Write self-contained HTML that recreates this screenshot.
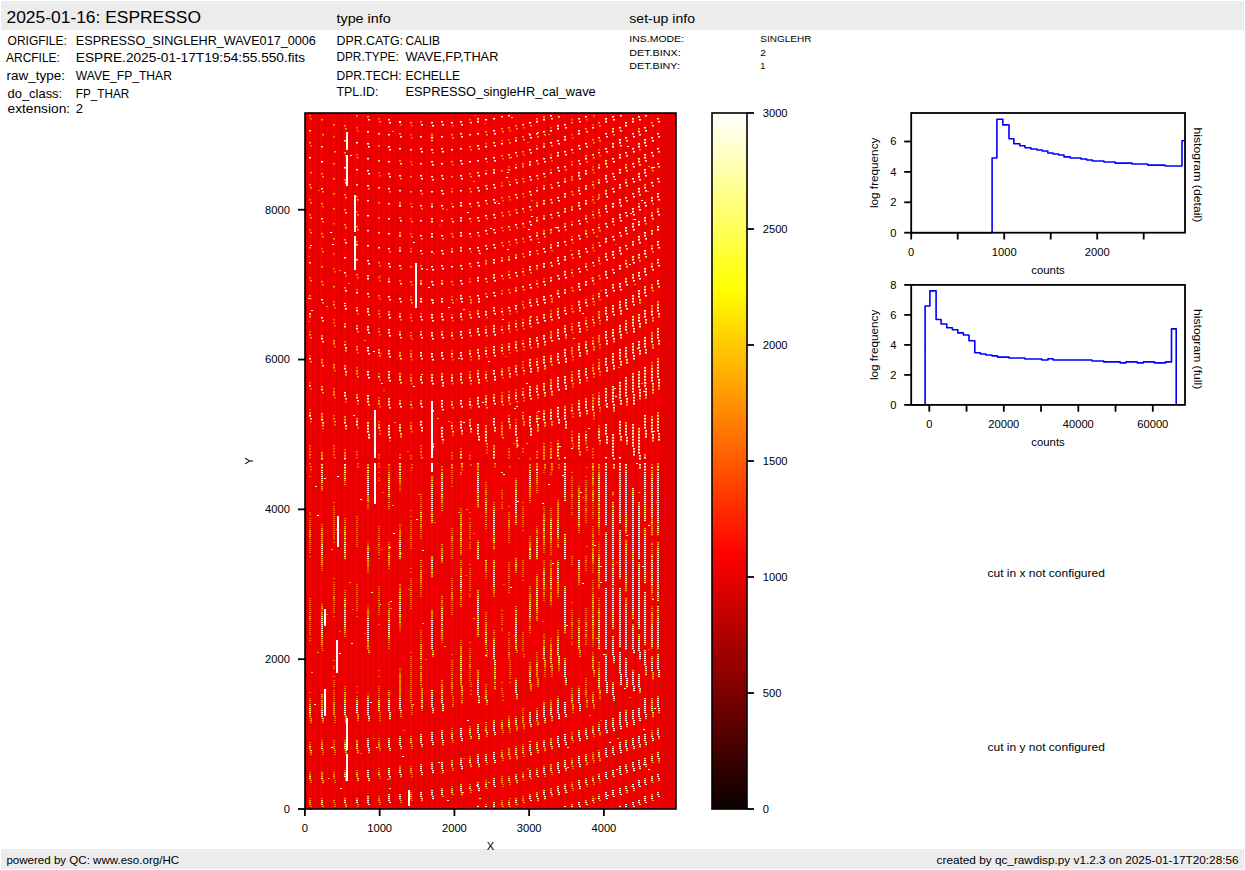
<!DOCTYPE html>
<html><head><meta charset="utf-8"><style>
html,body{margin:0;padding:0;background:#fff;width:1245px;height:870px;overflow:hidden}
svg{display:block}
text{font-family:"Liberation Sans", sans-serif;fill:#000}
</style></head><body>
<svg width="1245" height="870" viewBox="0 0 1245 870">
<rect x="1" y="1" width="1243" height="29" fill="#ececec"/>
<rect x="1" y="849" width="1243" height="20" fill="#ececec"/>
<text x="6.5" y="22.9" font-size="17.2" textLength="194.5" lengthAdjust="spacingAndGlyphs">2025-01-16: ESPRESSO</text>
<text x="336.5" y="22.6" font-size="12" textLength="54.2" lengthAdjust="spacingAndGlyphs">type info</text>
<text x="629.3" y="22.7" font-size="12" textLength="65.7" lengthAdjust="spacingAndGlyphs">set-up info</text>
<text x="7.6" y="44.9" font-size="12.6" textLength="59.2" lengthAdjust="spacingAndGlyphs">ORIGFILE:</text>
<text x="75.8" y="45.2" font-size="12.6" textLength="240" lengthAdjust="spacingAndGlyphs">ESPRESSO_SINGLEHR_WAVE017_0006</text>
<text x="6.1" y="61.8" font-size="12.6" textLength="53.7" lengthAdjust="spacingAndGlyphs">ARCFILE:</text>
<text x="75.8" y="61.5" font-size="12.6" textLength="229.4" lengthAdjust="spacingAndGlyphs">ESPRE.2025-01-17T19:54:55.550.fits</text>
<text x="6.5" y="80.2" font-size="12.6" textLength="58.5" lengthAdjust="spacingAndGlyphs">raw_type:</text>
<text x="75.8" y="80.4" font-size="12.6" textLength="96.1" lengthAdjust="spacingAndGlyphs">WAVE_FP_THAR</text>
<text x="7.5" y="97.5" font-size="12.6" textLength="54.7" lengthAdjust="spacingAndGlyphs">do_class:</text>
<text x="75.8" y="97.5" font-size="12.6" textLength="53.5" lengthAdjust="spacingAndGlyphs">FP_THAR</text>
<text x="7.5" y="113.4" font-size="12.6" textLength="62.6" lengthAdjust="spacingAndGlyphs">extension:</text>
<text x="75.8" y="113.4" font-size="12.6" textLength="7.2" lengthAdjust="spacingAndGlyphs">2</text>
<text x="336.5" y="44.8" font-size="12.6" textLength="66.5" lengthAdjust="spacingAndGlyphs">DPR.CATG:</text>
<text x="405.5" y="44.8" font-size="12.6" textLength="34.4" lengthAdjust="spacingAndGlyphs">CALIB</text>
<text x="336.5" y="61.4" font-size="12.6" textLength="62.2" lengthAdjust="spacingAndGlyphs">DPR.TYPE:</text>
<text x="405.5" y="61.4" font-size="12.6" textLength="92.9" lengthAdjust="spacingAndGlyphs">WAVE,FP,THAR</text>
<text x="336.5" y="79.5" font-size="12.6" textLength="65.1" lengthAdjust="spacingAndGlyphs">DPR.TECH:</text>
<text x="405.5" y="79.5" font-size="12.6" textLength="54.6" lengthAdjust="spacingAndGlyphs">ECHELLE</text>
<text x="336.5" y="96.4" font-size="12.6" textLength="41.9" lengthAdjust="spacingAndGlyphs">TPL.ID:</text>
<text x="405.5" y="96.4" font-size="12.6" textLength="190.2" lengthAdjust="spacingAndGlyphs">ESPRESSO_singleHR_cal_wave</text>
<text x="629.3" y="42.4" font-size="9.9" textLength="54.7" lengthAdjust="spacingAndGlyphs">INS.MODE:</text>
<text x="760.3" y="42.4" font-size="9.9" textLength="51.1" lengthAdjust="spacingAndGlyphs">SINGLEHR</text>
<text x="629.3" y="55.6" font-size="9.9" textLength="51.4" lengthAdjust="spacingAndGlyphs">DET.BINX:</text>
<text x="760.3" y="55.6" font-size="9.9" textLength="5.6" lengthAdjust="spacingAndGlyphs">2</text>
<text x="629.3" y="68.7" font-size="9.9" textLength="50.6" lengthAdjust="spacingAndGlyphs">DET.BINY:</text>
<text x="760.3" y="68.7" font-size="9.9" textLength="5.1" lengthAdjust="spacingAndGlyphs">1</text>
<rect x="305" y="113" width="371" height="696" fill="#e40000"/>
<path d="M310.0 114V459M310.0 463V808M321.7 114V459M321.7 463V808M333.6 114V459M333.6 463V808M345.1 114V459M345.1 463V808M356.7 114V459M356.7 463V808M368.1 114V459M368.1 463V808M378.8 114V459M378.8 463V808M389.3 114V459M389.3 463V808M400.5 114V459M400.5 463V808M410.9 114V459M410.9 463V808M421.2 114V459M421.2 463V808M432.0 114V459M432.0 463V808M441.9 114V459M441.9 463V808M451.8 114V459M451.8 463V808M460.9 114V459M460.9 463V808M469.8 114V459M469.8 463V808M477.9 114V459M477.9 463V808M486.1 114V459M486.1 463V808M494.1 114V459M494.1 463V808M501.6 114V459M501.6 463V808M508.9 114V459M508.9 463V808M516.2 114V459M516.2 463V808M523.0 114V459M523.0 463V808M530.3 114V459M530.3 463V808M537.4 114V459M537.4 463V808M544.2 114V459M544.2 463V808M550.8 114V459M550.8 463V808M558.0 114V459M558.0 463V808M564.8 114V459M564.8 463V808M571.8 114V459M571.8 463V808M578.9 114V459M578.9 463V808M585.8 114V459M585.8 463V808M592.8 114V459M592.8 463V808M599.4 114V459M599.4 463V808M606.2 114V459M606.2 463V808M612.8 114V459M612.8 463V808M619.7 114V459M619.7 463V808M626.4 114V459M626.4 463V808M632.7 114V459M632.7 463V808M638.9 114V459M638.9 463V808M645.1 114V459M645.1 463V808M651.8 114V459M651.8 463V808M658.1 114V459M658.1 463V808" stroke="#f20000" stroke-width="4" fill="none"/>
<path d="M315.8 114V459M315.8 463V808M327.6 114V459M327.6 463V808M339.3 114V459M339.3 463V808M350.9 114V459M350.9 463V808M362.4 114V459M362.4 463V808M373.5 114V459M373.5 463V808M384.0 114V459M384.0 463V808M394.9 114V459M394.9 463V808M405.7 114V459M405.7 463V808M416.0 114V459M416.0 463V808M426.6 114V459M426.6 463V808M437.0 114V459M437.0 463V808M446.8 114V459M446.8 463V808M456.3 114V459M456.3 463V808M465.3 114V459M465.3 463V808M473.8 114V459M473.8 463V808M482.0 114V459M482.0 463V808M490.1 114V459M490.1 463V808M497.8 114V459M497.8 463V808M505.3 114V459M505.3 463V808M512.6 114V459M512.6 463V808M526.6 114V459M526.6 463V808M533.8 114V459M533.8 463V808M554.4 114V459M554.4 463V808M575.4 114V459M575.4 463V808M589.3 114V459M589.3 463V808" stroke="#ec0000" stroke-width="3" fill="none"/>
<path d="M310 313V317.5M310 412V416.5M310 530V537.5M310 616V619.5M310 704V717.5M310 746V749.5M310 774V779.5M310 800V805.5M311 718V721.5M311 750V753.5M322 335V339.5M322 359V363.5M322 386V390.5M322 413V420.5M322 452V459.5M322 464V468.5M322 470V483.5M322 486V489.5M322 528V565.5M322 606V609.5M322 612V645.5M322 694V697.5M322 700V717.5M322 742V749.5M322 772V779.5M322 800V805.5M323 422V426.5M323 718V721.5M323 780V783.5M334 340V344.5M334 364V368.5M334 391V395.5M334 596V599.5M334 702V715.5M334 746V749.5M334 774V777.5M345 323V327.5M345 365V369.5M345 392V396.5M345 416V423.5M345 452V459.5M345 464V468.5M345 470V481.5M345 526V559.5M345 598V633.5M345 692V715.5M345 742V749.5M345 772V777.5M345 798V803.5M346 347V351.5M346 371V375.5M346 425V429.5M346 716V723.5M346 750V753.5M346 778V781.5M346 804V807.5M357 307V311.5M357 325V329.5M357 346V350.5M357 370V374.5M357 394V398.5M357 418V425.5M357 700V713.5M357 740V749.5M357 772V777.5M357 798V803.5M358 714V719.5M358 750V753.5M358 778V781.5M368 275V279.5M368 308V312.5M368 326V330.5M368 347V351.5M368 371V375.5M368 395V402.5M368 422V432.5M368 464V468.5M368 470V501.5M368 546V567.5M368 610V649.5M368 696V715.5M368 738V747.5M368 770V777.5M368 796V803.5M369 434V438.5M369 650V653.5M369 716V721.5M369 748V753.5M369 778V781.5M379 349V353.5M379 400V404.5M379 424V428.5M379 700V711.5M379 742V747.5M379 772V775.5M379 798V801.5M389 278V282.5M389 311V315.5M389 329V333.5M389 350V354.5M389 371V378.5M389 398V405.5M389 425V435.5M389 472V497.5M389 546V549.5M389 552V565.5M389 610V639.5M389 692V695.5M389 698V711.5M389 738V747.5M389 768V775.5M389 794V801.5M390 712V719.5M390 748V751.5M390 776V779.5M400 202V206.5M400 232V236.5M400 247V251.5M400 313V317.5M400 331V335.5M400 352V356.5M400 373V380.5M400 400V404.5M400 424V431.5M400 463V470.5M400 472V483.5M400 530V559.5M400 588V623.5M400 674V709.5M400 736V745.5M400 766V773.5M400 794V799.5M401 433V437.5M401 710V713.5M401 746V749.5M401 774V777.5M411 353V357.5M411 377V381.5M411 425V429.5M411 738V743.5M411 768V773.5M411 794V799.5M412 704V707.5M421 280V284.5M421 298V302.5M421 331V335.5M421 352V356.5M421 376V380.5M421 400V404.5M421 421V425.5M421 512V521.5M421 524V527.5M421 570V583.5M421 644V659.5M421 666V669.5M421 672V681.5M421 734V743.5M421 764V771.5M421 792V797.5M422 427V431.5M422 688V709.5M422 744V747.5M422 772V775.5M422 798V801.5M432 134V138.5M432 203V207.5M432 218V222.5M432 233V237.5M432 314V318.5M432 332V336.5M432 353V357.5M432 374V381.5M432 401V408.5M432 428V441.5M432 476V523.5M432 556V577.5M432 610V649.5M432 690V707.5M432 732V741.5M432 762V769.5M432 790V795.5M433 443V447.5M433 650V655.5M433 708V713.5M433 742V745.5M433 770V773.5M433 796V799.5M442 280V284.5M442 298V302.5M442 313V317.5M442 331V335.5M442 352V356.5M442 373V380.5M442 400V407.5M442 427V437.5M442 472V503.5M442 548V561.5M442 600V603.5M442 606V639.5M442 684V703.5M442 730V739.5M442 762V769.5M442 788V795.5M443 382V386.5M443 704V711.5M443 740V745.5M443 770V773.5M452 248V252.5M452 332V336.5M452 353V357.5M452 374V381.5M452 401V405.5M452 425V429.5M452 464V468.5M452 536V541.5M452 592V599.5M452 682V689.5M452 732V739.5M452 760V767.5M452 788V793.5M461 202V206.5M461 217V221.5M461 232V236.5M461 247V251.5M461 295V299.5M461 313V317.5M461 331V335.5M461 352V356.5M461 373V380.5M461 400V404.5M461 421V428.5M461 451V458.5M461 514V547.5M461 550V553.5M461 568V593.5M461 596V599.5M461 646V685.5M461 728V737.5M461 758V765.5M461 784V791.5M462 430V434.5M462 463V467.5M462 686V695.5M462 700V703.5M462 738V741.5M462 766V769.5M462 792V795.5M470 329V333.5M470 350V354.5M470 374V378.5M470 401V405.5M470 419V426.5M470 664V667.5M470 728V735.5M470 758V763.5M470 786V789.5M471 299V303.5M471 428V432.5M471 736V739.5M471 764V767.5M478 118V122.5M478 277V281.5M478 310V314.5M478 328V332.5M478 349V353.5M478 370V377.5M478 397V404.5M478 424V434.5M478 463V470.5M478 472V507.5M478 542V559.5M478 590V635.5M478 670V695.5M478 724V733.5M478 754V763.5M478 782V787.5M479 298V302.5M479 355V359.5M479 379V383.5M479 436V440.5M479 696V703.5M479 734V739.5M479 764V767.5M479 788V791.5M486 260V264.5M486 311V315.5M486 329V333.5M486 374V378.5M486 395V405.5M486 425V441.5M486 490V495.5M486 498V513.5M486 560V571.5M486 622V645.5M486 690V699.5M486 726V731.5M486 754V761.5M486 782V787.5M487 700V703.5M487 732V735.5M494 169V173.5M494 259V263.5M494 274V278.5M494 307V311.5M494 325V332.5M494 346V353.5M494 370V374.5M494 394V401.5M494 418V425.5M494 445V458.5M494 506V543.5M494 546V549.5M494 560V593.5M494 638V659.5M494 720V731.5M494 752V759.5M494 778V785.5M494 802V807.5M495 376V380.5M495 427V431.5M495 660V679.5M495 686V689.5M495 732V735.5M495 760V763.5M502 257V261.5M502 347V351.5M502 371V375.5M502 395V402.5M502 425V435.5M502 722V729.5M502 752V757.5M502 778V783.5M502 802V805.5M509 256V260.5M509 325V329.5M509 343V350.5M509 367V371.5M509 394V401.5M509 418V422.5M509 520V527.5M509 652V655.5M509 718V727.5M509 748V755.5M509 778V781.5M509 802V805.5M510 373V377.5M510 424V428.5M510 756V759.5M516 137V141.5M516 254V258.5M516 287V291.5M516 305V309.5M516 323V327.5M516 341V348.5M516 365V372.5M516 392V399.5M516 425V435.5M516 480V493.5M516 492V523.5M516 558V563.5M516 562V571.5M516 610V649.5M516 680V693.5M516 718V725.5M516 748V755.5M516 774V779.5M516 798V803.5M517 437V447.5M517 694V699.5M517 726V729.5M517 756V759.5M517 780V783.5M523 163V167.5M523 322V326.5M523 391V395.5M523 415V419.5M523 716V723.5M523 746V753.5M523 774V777.5M523 798V801.5M524 421V425.5M524 724V727.5M530 161V165.5M530 251V255.5M530 266V270.5M530 299V303.5M530 317V324.5M530 338V345.5M530 359V366.5M530 386V396.5M530 416V426.5M530 464V468.5M530 470V497.5M530 542V549.5M530 550V559.5M530 594V621.5M530 626V629.5M530 666V683.5M530 712V723.5M530 744V751.5M530 770V777.5M530 794V799.5M531 368V372.5M531 428V435.5M531 684V689.5M531 724V727.5M531 752V755.5M537 118V122.5M537 202V206.5M537 217V221.5M537 232V236.5M537 265V269.5M537 298V302.5M537 316V320.5M537 337V341.5M537 361V365.5M537 385V392.5M537 415V422.5M537 463V470.5M537 472V483.5M537 530V533.5M537 536V559.5M537 576V613.5M537 616V619.5M537 662V677.5M537 710V721.5M537 742V749.5M537 770V775.5M537 792V797.5M538 343V347.5M538 367V371.5M538 424V431.5M538 678V685.5M538 722V725.5M538 750V753.5M538 798V801.5M544 116V120.5M544 143V147.5M544 185V189.5M544 200V204.5M544 215V219.5M544 230V234.5M544 263V267.5M544 296V300.5M544 314V318.5M544 335V339.5M544 356V363.5M544 383V390.5M544 410V420.5M544 446V459.5M544 514V545.5M544 568V589.5M544 592V595.5M544 640V643.5M544 646V659.5M544 702V717.5M544 740V747.5M544 766V773.5M544 790V795.5M545 341V345.5M545 365V369.5M545 392V396.5M545 422V426.5M545 464V468.5M545 660V667.5M545 718V723.5M545 748V751.5M545 796V799.5M551 229V233.5M551 244V248.5M551 277V281.5M551 313V317.5M551 331V338.5M551 355V362.5M551 379V389.5M551 409V419.5M551 448V458.5M551 518V543.5M551 568V589.5M551 592V601.5M551 644V663.5M551 702V715.5M551 738V745.5M551 764V771.5M551 788V793.5M552 298V302.5M552 391V395.5M552 421V425.5M552 463V470.5M552 664V671.5M552 716V721.5M552 746V749.5M558 125V129.5M558 152V156.5M558 242V246.5M558 257V261.5M558 290V294.5M558 308V315.5M558 329V336.5M558 353V360.5M558 377V387.5M558 407V417.5M558 443V456.5M558 502V539.5M558 544V547.5M558 562V593.5M558 636V655.5M558 698V713.5M558 736V743.5M558 762V769.5M558 786V791.5M559 419V423.5M559 656V665.5M559 714V719.5M559 744V747.5M559 770V773.5M559 792V795.5M565 136V140.5M565 178V182.5M565 193V197.5M565 208V212.5M565 223V227.5M565 256V260.5M565 271V275.5M565 289V293.5M565 307V311.5M565 325V332.5M565 349V356.5M565 376V383.5M565 406V419.5M565 463V470.5M565 472V501.5M565 534V559.5M565 586V633.5M565 658V677.5M565 702V713.5M565 734V741.5M565 760V767.5M565 784V789.5M566 334V338.5M566 358V362.5M566 385V389.5M566 421V428.5M566 678V685.5M566 714V717.5M566 742V745.5M566 768V771.5M566 790V793.5M572 176V180.5M572 206V210.5M572 326V330.5M572 347V354.5M572 374V381.5M572 407V411.5M572 437V441.5M572 494V497.5M572 622V625.5M572 694V703.5M572 736V739.5M572 760V765.5M572 784V787.5M572 804V807.5M573 704V709.5M579 130V134.5M579 172V176.5M579 187V191.5M579 202V206.5M579 250V254.5M579 283V287.5M579 301V305.5M579 322V326.5M579 343V350.5M579 370V377.5M579 400V410.5M579 433V449.5M579 488V527.5M579 560V583.5M579 620V623.5M579 626V649.5M579 688V703.5M579 730V737.5M579 756V763.5M579 780V785.5M579 802V805.5M580 307V311.5M580 328V332.5M580 352V356.5M580 379V383.5M580 412V416.5M580 451V455.5M580 650V653.5M580 704V711.5M580 738V741.5M580 764V767.5M580 786V789.5M586 155V159.5M586 170V174.5M586 185V189.5M586 200V204.5M586 215V219.5M586 230V234.5M586 263V267.5M586 281V285.5M586 299V303.5M586 320V324.5M586 341V348.5M586 368V375.5M586 398V408.5M586 434V441.5M586 488V491.5M586 494V501.5M586 508V511.5M586 622V627.5M586 634V637.5M586 690V695.5M586 728V735.5M586 754V761.5M586 778V783.5M586 800V803.5M587 350V354.5M587 410V414.5M587 700V703.5M587 736V739.5M587 762V765.5M593 277V281.5M593 340V344.5M593 367V371.5M593 397V410.5M593 463V470.5M593 472V485.5M593 490V501.5M593 534V537.5M593 540V545.5M593 548V563.5M593 594V639.5M593 656V669.5M593 694V703.5M593 726V733.5M593 754V759.5M593 778V781.5M593 798V801.5M594 346V350.5M594 412V416.5M594 670V673.5M594 704V707.5M599 164V168.5M599 179V183.5M599 194V198.5M599 209V213.5M599 257V261.5M599 293V297.5M599 311V318.5M599 335V342.5M599 362V369.5M599 395V405.5M599 428V438.5M599 464V468.5M599 472V527.5M599 554V571.5M599 570V581.5M599 584V587.5M599 608V649.5M599 668V689.5M599 724V731.5M599 752V757.5M599 774V779.5M599 796V799.5M600 690V693.5M600 732V735.5M600 758V761.5M606 118V122.5M606 160V164.5M606 175V179.5M606 190V194.5M606 205V209.5M606 238V242.5M606 253V257.5M606 271V275.5M606 289V293.5M606 307V314.5M606 331V338.5M606 358V365.5M606 388V401.5M606 424V434.5M606 463V470.5M606 472V525.5M606 532V581.5M606 588V649.5M606 654V681.5M606 720V729.5M606 748V755.5M606 772V777.5M606 792V797.5M607 316V320.5M607 340V344.5M607 367V371.5M607 403V407.5M607 436V443.5M607 682V693.5M607 730V733.5M613 128V132.5M613 143V147.5M613 203V207.5M613 218V222.5M613 251V255.5M613 284V288.5M613 305V312.5M613 329V336.5M613 353V363.5M613 386V402.5M613 434V456.5M613 492V495.5M613 502V629.5M613 636V655.5M613 682V695.5M613 718V727.5M613 746V753.5M613 770V775.5M613 790V795.5M614 338V342.5M614 365V369.5M614 404V411.5M614 464V468.5M614 656V663.5M614 696V701.5M614 728V731.5M620 139V143.5M620 154V158.5M620 169V173.5M620 184V188.5M620 199V203.5M620 214V218.5M620 247V251.5M620 265V269.5M620 283V287.5M620 301V308.5M620 325V332.5M620 349V359.5M620 382V398.5M620 421V434.5M620 463V470.5M620 472V487.5M620 486V523.5M620 530V579.5M620 588V647.5M620 652V673.5M620 712V725.5M620 742V749.5M620 766V773.5M620 788V793.5M621 310V314.5M621 334V338.5M621 361V365.5M621 400V404.5M621 436V440.5M621 674V685.5M621 726V729.5M621 750V753.5M626 122V126.5M626 164V168.5M626 179V183.5M626 227V231.5M626 260V264.5M626 278V282.5M626 299V306.5M626 320V330.5M626 347V357.5M626 377V396.5M626 422V435.5M626 464V468.5M626 470V533.5M626 540V591.5M626 598V649.5M626 658V677.5M626 710V721.5M626 740V747.5M626 764V769.5M626 786V789.5M626 804V807.5M627 359V363.5M627 398V405.5M627 437V444.5M627 678V687.5M627 722V727.5M627 748V751.5M627 770V773.5M627 790V793.5M633 118V122.5M633 208V212.5M633 223V227.5M633 241V245.5M633 256V260.5M633 274V278.5M633 295V302.5M633 316V326.5M633 343V353.5M633 373V392.5M633 424V446.5M633 488V619.5M633 624V649.5M633 670V685.5M633 710V719.5M633 738V745.5M633 762V767.5M633 784V787.5M633 802V805.5M634 328V332.5M634 355V359.5M634 394V404.5M634 448V455.5M634 650V653.5M634 686V691.5M634 720V725.5M634 746V749.5M634 768V771.5M634 788V791.5M639 128V132.5M639 143V147.5M639 158V162.5M639 173V177.5M639 188V192.5M639 203V207.5M639 221V225.5M639 236V240.5M639 254V258.5M639 272V276.5M639 290V297.5M639 314V321.5M639 341V348.5M639 371V387.5M639 428V453.5M639 502V559.5M639 562V629.5M639 634V651.5M639 674V687.5M639 708V717.5M639 736V743.5M639 760V765.5M639 780V785.5M639 800V803.5M640 299V303.5M640 323V327.5M640 350V354.5M640 389V399.5M640 455V459.5M640 464V468.5M640 652V659.5M640 688V693.5M640 718V721.5M640 744V747.5M640 766V769.5M645 139V143.5M645 154V158.5M645 169V173.5M645 184V188.5M645 217V221.5M645 232V236.5M645 250V254.5M645 268V272.5M645 286V293.5M645 310V317.5M645 337V347.5M645 367V386.5M645 415V428.5M645 454V458.5M645 463V470.5M645 472V521.5M645 528V583.5M645 592V645.5M645 650V665.5M645 698V713.5M645 734V741.5M645 758V763.5M645 778V783.5M645 796V801.5M646 319V323.5M646 349V353.5M646 388V398.5M646 430V437.5M646 666V675.5M646 714V719.5M646 742V745.5M646 764V767.5M652 197V201.5M652 212V216.5M652 230V234.5M652 245V249.5M652 263V267.5M652 284V288.5M652 305V315.5M652 332V342.5M652 365V381.5M652 416V432.5M652 470V535.5M652 554V593.5M652 612V647.5M652 656V671.5M652 698V711.5M652 732V737.5M652 756V761.5M652 776V781.5M652 794V799.5M653 317V321.5M653 344V348.5M653 383V393.5M653 434V441.5M653 672V679.5M653 712V717.5M653 738V741.5M658 193V197.5M658 208V212.5M658 226V230.5M658 241V245.5M658 259V263.5M658 280V284.5M658 301V311.5M658 328V338.5M658 358V377.5M658 412V431.5M658 463V470.5M658 472V535.5M658 542V601.5M658 606V649.5M658 654V669.5M658 696V707.5M658 728V735.5M658 752V757.5M658 774V777.5M658 792V795.5M659 313V317.5M659 340V344.5M659 379V389.5M659 433V440.5M659 670V677.5M659 708V713.5M659 736V739.5M659 758V761.5M659 778V781.5" stroke="#ff8000" stroke-width="2" fill="none" opacity="0.5"/>
<path d="M310 157V158.5M310 358V359.5M310 415V416.5M322 161V162.5M322 299V300.5M322 317V318.5M322 338V339.5M322 419V420.5M345 167V168.5M345 257V258.5M345 272V273.5M345 368V369.5M345 392V396.5M345 422V423.5M345 458V459.5M345 464V468.5M346 182V183.5M346 242V243.5M346 290V291.5M346 308V309.5M346 347V348.5M346 425V426.5M357 142V143.5M357 259V260.5M357 292V293.5M357 328V329.5M357 421V425.5M358 400V401.5M368 131V132.5M368 143V144.5M368 158V159.5M368 170V171.5M368 185V186.5M368 200V201.5M368 215V216.5M368 230V231.5M368 245V246.5M368 260V261.5M368 278V279.5M368 293V294.5M368 308V312.5M368 326V330.5M368 347V351.5M368 371V375.5M368 395V402.5M368 425V432.5M369 119V120.5M369 146V147.5M369 173V174.5M369 263V264.5M369 332V333.5M369 353V354.5M369 377V378.5M369 434V438.5M389 134V135.5M389 146V147.5M389 161V162.5M389 188V189.5M389 203V204.5M389 218V219.5M389 233V234.5M389 248V249.5M389 263V264.5M389 281V282.5M389 296V297.5M389 314V315.5M389 332V333.5M389 350V354.5M389 374V378.5M389 401V405.5M389 425V435.5M390 122V123.5M390 149V150.5M390 176V177.5M390 266V267.5M390 317V318.5M390 335V336.5M390 356V357.5M390 380V381.5M390 437V438.5M400 148V149.5M400 175V176.5M400 190V191.5M400 205V206.5M400 250V251.5M400 265V266.5M400 298V299.5M400 316V317.5M400 334V335.5M400 379V380.5M400 403V404.5M400 427V428.5M400 463V464.5M400 469V470.5M401 136V137.5M401 220V221.5M401 406V407.5M421 136V137.5M421 148V149.5M421 163V164.5M421 175V176.5M421 190V191.5M421 205V206.5M421 220V221.5M421 235V236.5M421 250V251.5M421 283V284.5M421 298V302.5M421 316V317.5M421 334V335.5M421 352V356.5M421 379V380.5M421 403V404.5M421 421V425.5M422 124V125.5M422 151V152.5M422 178V179.5M422 268V269.5M422 382V383.5M422 406V407.5M422 427V428.5M432 122V123.5M432 137V138.5M432 149V150.5M432 161V162.5M432 176V177.5M432 191V192.5M432 206V207.5M432 221V222.5M432 236V237.5M432 251V252.5M432 266V267.5M432 281V282.5M432 299V300.5M432 314V318.5M432 332V336.5M432 353V357.5M432 377V381.5M432 401V408.5M432 428V441.5M433 125V126.5M433 164V165.5M433 269V270.5M433 284V285.5M433 302V303.5M433 320V321.5M433 338V339.5M433 359V360.5M433 383V384.5M433 410V411.5M433 446V447.5M442 136V137.5M442 163V164.5M442 190V191.5M442 205V206.5M442 220V221.5M442 235V236.5M442 250V251.5M442 265V266.5M442 283V284.5M442 298V302.5M442 316V317.5M442 334V335.5M442 352V356.5M442 376V380.5M442 400V407.5M442 427V437.5M443 124V125.5M443 151V152.5M443 178V179.5M443 193V194.5M443 253V254.5M443 268V269.5M443 319V320.5M443 337V338.5M443 358V359.5M443 382V383.5M443 439V440.5M452 122V123.5M452 149V150.5M452 266V267.5M452 317V318.5M452 335V336.5M452 377V381.5M461 121V122.5M461 148V149.5M461 160V161.5M461 175V176.5M461 190V191.5M461 202V206.5M461 217V221.5M461 232V236.5M461 250V251.5M461 265V266.5M461 280V281.5M461 298V299.5M461 313V317.5M461 331V335.5M461 352V356.5M461 376V380.5M461 400V404.5M461 424V428.5M462 124V125.5M462 136V137.5M462 163V164.5M462 178V179.5M462 283V284.5M462 301V302.5M462 358V359.5M462 406V407.5M462 430V431.5M470 161V162.5M470 203V204.5M470 233V234.5M470 248V249.5M470 332V333.5M470 353V354.5M470 377V378.5M470 404V405.5M470 425V426.5M471 428V429.5M478 121V122.5M478 133V134.5M478 145V146.5M478 160V161.5M478 187V188.5M478 202V203.5M478 217V218.5M478 232V233.5M478 247V248.5M478 262V263.5M478 277V281.5M478 295V296.5M478 313V314.5M478 328V332.5M478 352V353.5M478 373V377.5M478 397V404.5M478 424V434.5M479 175V176.5M479 190V191.5M479 250V251.5M479 265V266.5M479 298V302.5M479 316V317.5M479 334V335.5M479 355V356.5M479 379V380.5M479 406V407.5M479 436V440.5M486 119V120.5M486 146V147.5M486 158V159.5M486 173V174.5M486 215V216.5M486 230V231.5M486 314V315.5M486 332V333.5M486 353V354.5M486 377V378.5M486 401V402.5M486 431V438.5M487 188V189.5M487 248V249.5M487 296V297.5M494 118V119.5M494 130V131.5M494 157V158.5M494 172V173.5M494 184V185.5M494 199V200.5M494 214V215.5M494 229V230.5M494 244V245.5M494 259V263.5M494 277V278.5M494 292V293.5M494 310V311.5M494 328V332.5M494 346V353.5M494 370V374.5M494 397V401.5M494 418V425.5M494 451V455.5M495 133V134.5M495 145V146.5M495 160V161.5M495 187V188.5M495 202V203.5M495 247V248.5M495 280V281.5M495 295V296.5M495 313V314.5M495 334V335.5M495 376V380.5M495 403V404.5M495 427V428.5M502 143V144.5M502 311V312.5M502 329V330.5M509 115V116.5M509 307V308.5M509 325V326.5M509 346V347.5M509 397V398.5M509 421V422.5M510 373V374.5M516 140V141.5M516 167V168.5M516 224V225.5M516 257V258.5M516 272V273.5M516 305V309.5M516 347V348.5M516 368V372.5M516 395V396.5M516 425V435.5M517 182V183.5M517 440V441.5M523 343V344.5M523 394V395.5M530 122V123.5M530 134V135.5M530 149V150.5M530 164V165.5M530 176V177.5M530 191V192.5M530 206V207.5M530 221V222.5M530 236V237.5M530 251V255.5M530 266V270.5M530 284V285.5M530 302V303.5M530 320V324.5M530 341V345.5M530 362V366.5M530 389V396.5M530 416V426.5M531 137V138.5M531 179V180.5M531 224V225.5M531 287V288.5M531 305V306.5M531 368V372.5M531 428V429.5M531 434V435.5M537 121V122.5M537 133V134.5M537 148V149.5M537 160V161.5M537 190V191.5M537 235V236.5M537 301V302.5M537 319V320.5M537 337V341.5M537 361V362.5M537 388V392.5M537 418V422.5M537 469V470.5M538 322V323.5M538 343V344.5M538 424V425.5M544 119V120.5M544 131V132.5M544 146V147.5M544 158V159.5M544 173V174.5M544 188V189.5M544 203V204.5M544 218V219.5M544 233V234.5M544 248V249.5M544 263V267.5M544 281V282.5M544 296V300.5M544 317V318.5M544 335V339.5M544 359V363.5M544 389V390.5M544 413V420.5M545 161V162.5M545 251V252.5M545 302V303.5M545 320V321.5M545 341V342.5M545 365V366.5M545 392V393.5M551 115V116.5M551 130V131.5M551 142V143.5M551 157V158.5M551 172V173.5M551 214V215.5M551 247V248.5M551 280V281.5M551 295V296.5M551 337V338.5M551 358V359.5M551 385V389.5M551 412V419.5M558 125V129.5M558 140V141.5M558 152V156.5M558 167V168.5M558 182V183.5M558 197V198.5M558 212V213.5M558 227V228.5M558 242V246.5M558 260V261.5M558 275V276.5M558 293V294.5M558 311V315.5M558 329V336.5M558 353V360.5M558 377V387.5M558 407V417.5M558 449V450.5M558 455V456.5M559 143V144.5M559 170V171.5M559 185V186.5M559 200V201.5M559 215V216.5M559 230V231.5M559 263V264.5M559 278V279.5M559 296V297.5M559 317V318.5M559 338V339.5M559 362V363.5M559 389V390.5M559 419V423.5M565 124V125.5M565 136V140.5M565 151V152.5M565 166V167.5M565 181V182.5M565 193V197.5M565 211V212.5M565 226V227.5M565 241V242.5M565 256V260.5M565 274V275.5M565 292V293.5M565 310V311.5M565 328V332.5M565 349V356.5M565 376V383.5M565 409V419.5M565 457V458.5M565 466V470.5M566 277V278.5M566 313V314.5M566 334V335.5M566 358V362.5M566 385V389.5M566 421V425.5M572 149V150.5M572 239V240.5M579 118V119.5M579 130V134.5M579 145V146.5M579 160V161.5M579 172V176.5M579 190V191.5M579 205V206.5M579 220V221.5M579 235V236.5M579 253V254.5M579 268V269.5M579 283V287.5M579 301V305.5M579 322V326.5M579 346V350.5M579 370V377.5M579 403V410.5M579 436V440.5M580 148V149.5M580 163V164.5M580 178V179.5M580 208V209.5M580 223V224.5M580 238V239.5M580 271V272.5M580 289V290.5M580 307V308.5M580 328V332.5M580 352V356.5M580 379V380.5M580 412V413.5M586 116V117.5M586 143V144.5M586 158V159.5M586 173V174.5M586 188V189.5M586 203V204.5M586 218V219.5M586 233V234.5M586 248V249.5M586 266V267.5M586 281V285.5M586 302V303.5M586 323V324.5M586 344V348.5M586 371V375.5M586 401V408.5M586 434V438.5M587 251V252.5M587 377V378.5M587 410V411.5M593 127V128.5M593 262V263.5M593 280V281.5M593 343V344.5M593 406V407.5M599 167V168.5M599 182V183.5M599 398V402.5M599 431V435.5M600 245V246.5M606 118V122.5M606 133V134.5M606 148V149.5M606 163V164.5M606 175V179.5M606 193V194.5M606 208V209.5M606 223V224.5M606 238V242.5M606 256V257.5M606 271V275.5M606 289V293.5M606 310V314.5M606 331V338.5M606 358V365.5M606 391V401.5M606 424V434.5M606 457V458.5M606 463V470.5M607 136V137.5M607 151V152.5M607 181V182.5M607 196V197.5M607 211V212.5M607 226V227.5M607 259V260.5M607 277V278.5M607 295V296.5M607 316V320.5M607 340V344.5M607 367V371.5M607 403V407.5M607 436V443.5M613 116V117.5M613 131V132.5M613 143V147.5M613 158V159.5M613 173V174.5M613 188V189.5M613 203V207.5M613 221V222.5M613 236V237.5M613 251V255.5M613 269V270.5M613 287V288.5M613 308V312.5M613 332V336.5M613 356V363.5M613 389V402.5M613 434V456.5M614 119V120.5M614 161V162.5M614 176V177.5M614 191V192.5M614 239V240.5M614 272V273.5M614 290V291.5M614 314V315.5M614 338V339.5M614 365V366.5M614 404V408.5M614 458V459.5M620 127V128.5M620 139V143.5M620 154V158.5M620 169V173.5M620 184V188.5M620 199V203.5M620 214V218.5M620 232V233.5M620 247V251.5M620 265V269.5M620 283V287.5M620 304V308.5M620 325V332.5M620 349V359.5M620 382V398.5M620 421V434.5M620 457V458.5M620 463V470.5M621 115V116.5M621 130V131.5M621 205V206.5M621 220V221.5M621 235V236.5M621 253V254.5M621 289V290.5M621 310V311.5M621 334V335.5M621 361V362.5M621 400V404.5M621 436V437.5M626 122V126.5M626 137V138.5M626 152V153.5M626 167V168.5M626 182V183.5M626 197V198.5M626 212V213.5M626 227V231.5M626 245V246.5M626 263V264.5M626 281V282.5M626 299V306.5M626 323V330.5M626 350V357.5M626 380V396.5M626 425V435.5M626 464V468.5M627 155V156.5M627 215V216.5M627 284V285.5M627 308V309.5M627 398V399.5M627 437V441.5M633 118V122.5M633 133V134.5M633 148V149.5M633 163V164.5M633 178V179.5M633 193V194.5M633 208V212.5M633 223V227.5M633 241V245.5M633 259V260.5M633 277V278.5M633 295V302.5M633 319V326.5M633 346V353.5M633 376V392.5M633 424V446.5M634 136V137.5M634 151V152.5M634 166V167.5M634 181V182.5M634 196V197.5M634 214V215.5M634 229V230.5M634 262V263.5M634 280V281.5M634 304V305.5M634 328V332.5M634 355V359.5M634 394V404.5M634 448V455.5M639 116V117.5M639 131V132.5M639 143V147.5M639 161V162.5M639 173V177.5M639 188V192.5M639 206V207.5M639 221V225.5M639 236V240.5M639 254V258.5M639 272V276.5M639 290V297.5M639 317V321.5M639 341V348.5M639 374V387.5M639 434V453.5M640 119V120.5M640 134V135.5M640 179V180.5M640 209V210.5M640 242V243.5M640 278V279.5M640 323V324.5M640 350V354.5M640 389V396.5M640 455V459.5M640 464V465.5M645 127V128.5M645 139V143.5M645 154V158.5M645 169V173.5M645 187V188.5M645 202V203.5M645 217V221.5M645 232V236.5M645 250V254.5M645 268V272.5M645 289V293.5M645 310V317.5M645 337V347.5M645 367V386.5M645 418V428.5M645 457V458.5M645 463V470.5M646 115V116.5M646 130V131.5M646 145V146.5M646 160V161.5M646 175V176.5M646 190V191.5M646 205V206.5M646 238V239.5M646 274V275.5M646 295V296.5M646 319V320.5M646 352V353.5M646 388V395.5M646 430V437.5M652 137V138.5M652 152V153.5M652 167V168.5M652 182V183.5M652 200V201.5M652 215V216.5M652 266V267.5M652 311V315.5M652 338V342.5M652 371V381.5M652 419V420.5M652 428V432.5M653 140V141.5M653 155V156.5M653 383V384.5M653 434V438.5M658 133V134.5M658 148V149.5M658 163V164.5M658 178V179.5M658 193V197.5M658 211V212.5M658 226V230.5M658 241V245.5M658 262V263.5M658 280V284.5M658 307V311.5M658 331V338.5M658 364V377.5M658 421V431.5M659 121V122.5M659 136V137.5M659 181V182.5M659 214V215.5M659 265V266.5M659 313V314.5M659 340V341.5M659 379V383.5M659 433V434.5M659 439V440.5" stroke="#ffffff" stroke-width="2" stroke-dasharray="1.5 1.5" fill="none"/>
<path d="M310 712V713M311 245V246M312 310V311M315 704V705M318 515V516M322 470V473M322 476V479M322 546V549M322 552V553M322 618V619M322 622V633M322 710V717M322 748V749M322 778V779M322 802V803M325 478V479M331 232V233M332 747V748M333 244V245M338 476V477M340 653V654M345 303V304M345 538V539M345 542V545M345 550V553M345 604V605M345 610V619M345 622V625M345 704V715M345 746V747M345 776V777M345 802V803M351 155V156M357 704V713M357 744V745M357 800V803M361 499V500M368 478V495M368 552V557M368 620V639M368 700V715M368 740V747M368 770V777M368 798V803M369 716V719M369 748V751M369 804V805M371 702V703M374 351V352M389 486V489M389 620V621M389 624V627M389 630V633M389 700V711M389 740V747M389 770V775M389 796V801M390 547V548M390 712V715M390 748V749M390 776V777M390 802V803M394 533V534M400 122V123M400 472V473M400 542V549M400 556V557M400 604V611M400 698V709M400 738V739M400 742V745M400 770V773M400 796V799M401 710V711M401 746V747M401 774V775M403 756V757M413 704V705M414 242V243M414 386V387M417 519V520M421 738V743M421 766V771M421 792V797M422 700V701M422 706V707M422 744V745M422 772V773M429 287V288M432 488V491M432 494V511M432 560V567M432 620V649M432 694V707M432 732V741M432 764V769M432 790V795M433 708V711M433 742V743M433 770V773M433 796V799M439 762V763M442 478V479M442 482V491M442 494V495M442 558V559M442 614V615M442 618V621M442 624V625M442 692V693M442 700V703M442 732V739M442 762V769M442 790V795M443 704V707M443 710V711M443 740V741M448 800V801M449 307V308M452 736V737M452 764V765M461 534V535M461 576V577M461 582V587M461 668V669M461 674V675M461 728V737M461 760V765M461 788V791M462 298V299M462 738V741M462 766V769M462 792V793M464 422V423M468 212V213M468 720V721M470 732V733M470 762V763M470 788V789M477 785V786M478 476V493M478 500V501M478 550V551M478 556V559M478 600V615M478 620V625M478 680V695M478 728V733M478 756V763M478 784V787M478 806V807M479 696V697M479 702V703M479 734V735M479 764V765M479 788V791M480 253V254M483 402V403M486 655V656M486 730V731M486 754V761M486 806V807M487 700V701M489 361V362M491 228V229M494 512V515M494 518V531M494 534V535M494 572V579M494 582V585M494 646V657M494 724V731M494 752V759M494 780V785M494 804V807M495 662V665M495 732V733M495 760V761M495 786V787M499 203V204M504 474V475M507 177V178M509 778V779M511 587V588M516 490V493M516 496V497M516 500V513M516 516V517M516 562V563M516 618V619M516 624V635M516 640V641M516 686V693M516 720V721M516 754V755M516 776V779M516 800V801M517 406V407M517 694V695M518 501V502M527 383V384M530 472V473M530 476V483M530 549V550M530 556V557M530 608V609M530 614V617M530 674V677M530 680V681M530 714V723M530 746V751M530 772V777M530 796V799M531 724V725M531 754V755M531 800V801M532 216V217M537 472V473M537 542V543M537 546V547M537 550V553M537 590V595M537 604V605M537 664V665M537 714V719M537 772V773M537 796V797M543 503V504M544 530V531M544 574V575M544 578V579M544 652V655M544 658V659M544 706V717M544 742V747M544 768V773M544 792V795M545 299V300M545 718V719M545 774V775M545 796V797M551 524V525M551 534V535M551 580V581M551 658V659M551 666V667M551 710V715M551 744V745M551 770V771M551 792V793M552 716V717M552 794V795M556 227V228M558 528V531M558 534V535M558 568V571M558 574V579M558 644V645M558 648V649M558 652V653M558 702V713M558 736V743M558 764V769M558 788V791M559 656V657M559 714V719M559 744V747M559 770V773M559 792V793M560 446V447M563 475V476M565 472V493M565 496V497M565 544V559M565 592V623M565 626V627M565 664V677M565 702V713M565 734V741M565 764V767M565 786V789M566 678V681M566 714V715M566 742V745M566 768V769M566 790V793M567 625V626M572 448V449M579 502V503M579 506V507M579 510V517M579 560V567M579 632V633M579 636V637M579 646V647M579 694V703M579 732V737M579 756V763M579 782V785M579 802V805M580 704V711M580 738V741M580 764V767M580 786V787M580 806V807M581 492V493M583 313V314M583 583V584M586 732V735M586 758V759M586 782V783M586 802V803M587 447V448M587 736V737M593 616V617M593 700V701M593 730V733M593 780V781M593 800V801M595 545V546M599 478V483M599 488V493M599 498V501M599 560V561M599 566V567M599 570V571M599 622V623M599 626V629M599 632V633M599 640V643M599 680V681M599 686V687M599 728V731M599 756V757M599 776V779M599 798V799M601 582V583M604 654V655M606 472V525M606 534V537M606 540V581M606 588V649M606 656V681M606 720V729M606 748V755M606 772V777M606 792V797M607 682V691M607 730V733M607 756V757M607 778V779M607 798V799M610 742V743M613 506V507M613 514V519M613 522V559M613 564V565M613 568V573M613 576V615M613 620V623M613 626V627M613 636V637M613 640V655M613 684V685M613 688V695M613 722V727M613 748V753M613 770V775M613 790V795M614 656V661M614 696V699M614 728V731M614 754V755M614 796V797M615 388V389M616 396V397M617 769V770M620 472V515M620 518V523M620 530V535M620 538V577M620 588V591M620 594V643M620 646V647M620 652V673M620 712V725M620 744V749M620 766V773M620 788V793M620 806V807M621 674V685M621 726V729M621 750V753M621 774V775M621 794V795M625 688V689M626 472V515M626 526V527M626 550V551M626 556V571M626 574V575M626 578V579M626 582V583M626 604V605M626 608V611M626 614V649M626 658V659M626 662V677M626 714V721M626 744V747M626 766V769M626 788V789M626 804V807M627 535V536M627 678V683M627 722V725M627 748V749M627 770V771M627 790V791M628 146V147M630 264V265M633 488V489M633 496V553M633 560V611M633 626V627M633 630V649M633 672V685M633 710V719M633 740V745M633 762V767M633 784V787M633 802V805M634 652V653M634 686V691M634 720V723M634 746V747M634 768V771M634 788V789M634 806V807M635 219V220M637 463V464M639 506V513M639 516V559M639 568V575M639 578V625M639 640V651M639 674V675M639 678V687M639 708V717M639 736V743M639 760V765M639 780V785M639 800V803M640 652V659M640 688V689M640 718V721M640 744V745M640 766V767M640 786V787M642 200V201M644 729V730M644 764V765M645 472V489M645 492V505M645 516V519M645 538V573M645 576V577M645 592V593M645 596V597M645 600V639M645 642V643M645 652V665M645 700V713M645 734V741M645 760V763M645 780V783M645 798V801M646 666V669M646 714V717M646 742V743M646 764V765M646 784V785M646 802V803M649 525V526M649 769V770M652 480V481M652 484V493M652 496V509M652 512V513M652 516V517M652 556V557M652 560V561M652 564V571M652 574V575M652 578V581M652 584V585M652 626V631M652 634V641M652 662V671M652 708V709M652 736V737M652 758V759M652 778V781M652 798V799M653 738V739M654 167V168M654 431V432M655 708V709M658 474V523M658 526V529M658 552V555M658 558V583M658 586V589M658 592V597M658 610V611M658 618V619M658 622V647M658 658V669M658 698V707M658 730V735M658 754V757M658 774V777M658 792V795M659 670V675M659 708V711M659 736V737M659 758V759M659 778V779M659 796V797" stroke="#ffffff" stroke-width="2" stroke-dasharray="1 1" fill="none"/>
<path d="M310 130V131.5M310 262V263.5M310 313V314.5M310 385V386.5M311 418V419.5M322 146V147.5M322 188V189.5M322 218V219.5M322 389V390.5M322 458V459.5M322 464V468.5M323 320V321.5M323 341V342.5M323 365V366.5M323 422V423.5M345 140V141.5M345 305V306.5M345 326V327.5M345 344V345.5M346 212V213.5M346 371V372.5M346 398V399.5M357 169V170.5M357 184V185.5M357 244V245.5M357 310V311.5M357 397V398.5M368 275V276.5M368 422V423.5M368 467V468.5M369 314V315.5M369 404V405.5M379 133V134.5M379 160V161.5M379 187V188.5M379 232V233.5M379 247V248.5M379 352V353.5M379 376V377.5M379 427V428.5M389 119V120.5M389 173V174.5M389 329V330.5M389 371V372.5M389 398V399.5M390 299V300.5M390 407V408.5M400 121V122.5M400 235V236.5M400 355V356.5M400 376V377.5M400 424V425.5M400 430V431.5M400 466V467.5M401 163V164.5M401 283V284.5M401 301V302.5M401 337V338.5M401 358V359.5M401 382V383.5M401 433V434.5M411 149V150.5M411 404V405.5M421 376V377.5M422 319V320.5M422 337V338.5M422 358V359.5M422 430V431.5M432 218V219.5M432 233V234.5M432 374V375.5M433 179V180.5M433 443V444.5M442 121V122.5M442 148V149.5M442 175V176.5M442 313V314.5M443 385V386.5M443 409V410.5M452 251V252.5M452 353V354.5M452 404V405.5M452 425V426.5M453 206V207.5M453 221V222.5M453 431V432.5M461 133V134.5M461 247V248.5M461 295V296.5M461 373V374.5M461 421V422.5M461 454V458.5M462 268V269.5M462 337V338.5M462 382V383.5M462 463V464.5M470 134V135.5M470 218V219.5M470 263V264.5M470 314V315.5M470 401V402.5M471 122V123.5M471 317V318.5M471 380V381.5M478 118V119.5M478 172V173.5M478 349V350.5M478 463V464.5M479 148V149.5M479 205V206.5M479 220V221.5M479 382V383.5M486 185V186.5M486 200V201.5M486 245V246.5M486 278V279.5M486 311V312.5M486 329V330.5M486 350V351.5M486 374V375.5M486 398V399.5M486 440V441.5M494 142V143.5M494 169V170.5M494 274V275.5M494 307V308.5M494 325V326.5M494 457V458.5M495 217V218.5M495 232V233.5M495 355V356.5M495 430V431.5M502 116V117.5M502 260V261.5M502 275V276.5M502 347V351.5M502 371V375.5M502 401V402.5M509 154V155.5M509 169V170.5M509 226V227.5M509 259V260.5M509 274V275.5M509 328V329.5M509 418V419.5M510 184V185.5M510 310V311.5M510 424V425.5M516 152V153.5M516 194V195.5M516 239V240.5M516 290V291.5M516 323V327.5M516 344V345.5M516 398V399.5M517 197V198.5M517 212V213.5M517 275V276.5M523 124V125.5M523 208V209.5M523 223V224.5M523 271V272.5M523 286V287.5M523 322V323.5M524 370V371.5M530 161V162.5M530 338V339.5M530 359V360.5M530 386V387.5M531 152V153.5M531 194V195.5M531 239V240.5M531 398V399.5M531 431V432.5M537 175V176.5M537 205V206.5M537 220V221.5M537 265V266.5M537 283V284.5M537 364V365.5M538 304V305.5M538 367V368.5M538 394V395.5M544 200V201.5M544 314V315.5M544 356V357.5M544 383V387.5M545 284V285.5M545 422V423.5M551 199V200.5M551 229V230.5M551 262V263.5M551 277V278.5M551 316V317.5M551 361V362.5M551 457V458.5M552 118V119.5M552 187V188.5M552 202V203.5M552 265V266.5M552 319V320.5M552 340V341.5M552 391V392.5M558 257V258.5M558 443V447.5M558 452V453.5M559 116V117.5M565 208V209.5M565 271V272.5M565 289V290.5M565 463V464.5M566 127V128.5M566 154V155.5M566 427V428.5M572 209V210.5M572 224V225.5M572 254V255.5M572 272V273.5M572 380V381.5M572 410V411.5M579 202V203.5M579 250V251.5M579 442V449.5M580 121V122.5M580 193V194.5M580 256V257.5M580 310V311.5M580 382V383.5M580 415V416.5M586 170V171.5M586 185V186.5M586 200V201.5M586 368V369.5M587 131V132.5M587 146V147.5M587 305V306.5M587 350V351.5M593 154V155.5M593 184V185.5M593 214V215.5M593 229V230.5M593 298V299.5M593 319V320.5M593 409V410.5M593 466V467.5M594 322V323.5M594 373V374.5M599 137V138.5M599 152V153.5M599 212V213.5M599 227V228.5M599 260V261.5M599 293V297.5M599 317V318.5M599 368V369.5M599 404V405.5M599 437V438.5M600 440V441.5M606 160V161.5M606 190V191.5M606 205V206.5M606 253V254.5M606 307V308.5M606 388V389.5M607 166V167.5M613 128V129.5M613 218V219.5M613 284V285.5M613 305V306.5M613 329V330.5M613 353V354.5M613 386V387.5M614 257V258.5M614 368V369.5M614 464V468.5M620 301V302.5M621 145V146.5M621 313V314.5M621 337V338.5M621 364V365.5M621 439V440.5M626 278V279.5M626 347V348.5M626 377V378.5M627 140V141.5M627 170V171.5M627 185V186.5M627 200V201.5M627 233V234.5M627 248V249.5M627 266V267.5M627 359V363.5M627 401V402.5M633 256V257.5M633 274V275.5M633 316V317.5M633 343V344.5M633 373V374.5M639 158V159.5M639 314V315.5M639 371V372.5M639 428V432.5M640 164V165.5M640 194V195.5M640 299V300.5M640 326V327.5M640 467V468.5M645 286V287.5M645 415V416.5M646 256V257.5M646 322V323.5M646 349V350.5M652 197V198.5M652 230V234.5M652 248V249.5M652 287V288.5M652 368V369.5M652 422V426.5M652 467V468.5M653 125V126.5M653 185V186.5M653 218V219.5M653 269V270.5M653 389V390.5M658 118V119.5M658 259V260.5M658 304V305.5M658 328V329.5M658 361V362.5M658 415V419.5M658 466V470.5M659 151V152.5M659 166V167.5M659 199V200.5M659 247V248.5M659 286V287.5M659 343V344.5M659 385V386.5M659 436V437.5" stroke="#ffff40" stroke-width="2" stroke-dasharray="1.5 1.5" fill="none"/>
<path d="M309 298V299M310 708V711M310 746V747M310 776V779M311 750V751M316 486V487M322 480V483M322 534V535M322 544V545M322 550V551M322 554V555M322 616V617M322 620V621M322 634V637M322 800V801M322 804V805M323 718V719M341 788V789M345 470V473M345 478V479M345 532V535M345 546V549M345 556V557M345 600V601M345 606V607M345 620V621M345 626V627M345 700V703M345 744V745M345 748V749M345 774V775M345 800V801M346 716V717M346 750V751M352 643V644M354 415V416M357 700V703M357 746V749M357 774V775M358 778V779M368 470V473M368 476V477M368 500V501M368 548V549M368 558V559M368 618V619M368 640V641M368 698V699M368 796V797M369 778V781M372 592V593M377 747V748M379 700V707M379 710V711M379 774V775M380 604V605M382 383V384M389 478V483M389 494V497M389 556V557M389 628V629M389 634V637M389 738V739M389 768V769M389 794V795M390 716V719M390 788V789M391 601V602M400 474V475M400 478V479M400 540V541M400 552V555M400 592V593M400 596V599M400 602V603M400 614V617M400 622V623M400 740V741M411 742V743M421 512V513M421 516V517M421 654V655M421 658V659M421 734V737M422 374V375M422 702V703M422 774V775M422 798V799M423 550V551M427 269V270M432 140V141M432 480V481M432 484V487M432 492V493M432 514V517M432 520V521M432 558V559M432 568V569M432 572V573M432 690V693M433 300V301M433 654V655M433 744V745M442 474V477M442 496V497M442 556V557M442 608V613M442 616V617M442 630V631M442 690V691M442 696V699M443 708V709M443 742V743M443 770V771M452 734V735M452 738V739M452 790V793M459 358V359M461 524V525M461 532V533M461 538V541M461 580V581M461 590V591M461 656V667M461 670V671M461 676V679M461 786V787M462 686V687M462 690V691M463 792V793M464 309V310M470 730V731M470 760V761M471 736V737M478 472V475M478 496V497M478 542V543M478 546V549M478 552V555M478 596V599M478 616V619M478 626V629M478 634V635M478 724V727M479 698V701M479 736V739M480 798V799M486 351V352M486 502V505M486 508V509M486 560V561M486 632V635M486 638V643M486 696V699M486 784V787M487 732V733M494 510V511M494 516V517M494 532V533M494 538V543M494 562V563M494 566V567M494 570V571M494 580V581M494 586V587M494 640V645M494 658V659M494 722V723M494 778V779M494 802V803M495 660V661M495 668V669M495 672V673M495 676V679M495 682V683M495 734V735M495 762V763M502 472V473M502 724V727M502 756V757M503 319V320M508 172V173M508 249V250M509 722V727M509 754V755M509 780V781M509 802V805M511 157V158M512 117V118M515 408V409M516 492V495M516 498V499M516 522V523M516 564V567M516 610V611M516 614V615M516 620V623M516 636V639M516 642V643M516 646V649M516 680V685M516 718V719M516 722V725M516 748V753M516 802V803M517 780V781M518 445V446M523 752V753M523 776V777M529 229V230M530 470V471M530 474V475M530 484V487M530 548V549M530 552V555M530 558V559M530 602V607M530 610V613M530 672V673M530 682V683M530 712V713M530 741V742M530 744V745M530 770V771M531 316V317M531 752V753M537 538V541M537 548V549M537 554V557M537 588V589M537 596V603M537 606V609M537 666V667M537 744V749M537 770V771M537 774V775M537 794V795M538 132V133M538 750V751M538 776V777M538 798V799M539 242V243M539 411V412M539 418V419M544 520V521M544 524V525M544 528V529M544 536V537M544 572V573M544 580V585M544 588V589M544 646V651M544 790V791M545 660V661M545 720V721M545 798V799M549 484V485M551 520V523M551 526V529M551 532V533M551 538V539M551 578V579M551 582V585M551 588V589M551 650V651M551 654V655M551 662V663M551 708V709M551 742V743M551 768V769M552 746V747M553 563V564M558 520V527M558 532V533M558 536V537M558 562V565M558 572V573M558 582V583M558 640V641M558 646V647M558 650V651M558 654V655M558 700V701M558 762V763M558 786V787M559 658V663M559 794V795M565 494V495M565 500V501M565 534V535M565 538V543M565 588V591M565 624V625M565 628V629M565 662V663M565 760V763M565 806V807M566 682V683M566 716V717M568 747V748M568 767V768M572 700V701M572 738V739M572 762V763M572 806V807M574 338V339M579 496V497M579 500V501M579 504V505M579 508V509M579 518V519M579 524V525M579 568V569M579 628V631M579 638V643M579 690V693M579 730V731M579 780V781M580 788V789M586 630V631M586 730V731M586 756V757M586 760V761M586 780V781M587 700V701M587 738V739M587 784V785M587 804V805M589 428V429M593 478V479M593 494V495M593 500V501M593 544V545M593 554V559M593 602V603M593 606V607M593 620V625M593 660V661M593 666V667M593 778V779M594 670V671M599 474V477M599 484V487M599 494V497M599 504V505M599 508V509M599 512V513M599 518V519M599 522V523M599 558V559M599 562V565M599 570V573M599 612V613M599 620V621M599 624V625M599 630V631M599 634V637M599 648V649M599 674V675M599 678V679M599 682V685M599 752V755M599 796V797M600 692V693M601 566V567M606 538V539M607 692V693M608 795V796M613 502V503M613 510V513M613 520V521M613 574V575M613 616V619M613 624V625M613 686V687M613 718V721M614 776V777M615 179V180M620 486V487M620 516V517M620 536V537M620 592V593M620 644V645M620 742V743M626 470V471M626 516V525M626 530V531M626 544V549M626 552V555M626 572V573M626 576V577M626 580V581M626 606V607M626 612V613M626 712V713M626 740V743M626 786V787M627 684V687M631 213V214M633 490V495M633 554V559M633 612V615M633 618V619M633 628V629M633 738V739M634 650V651M634 724V725M634 748V749M638 348V349M639 502V503M639 514V515M639 564V567M639 576V577M639 626V629M639 636V639M639 676V677M640 690V691M640 746V747M640 768V769M640 804V805M643 566V567M644 391V392M645 506V515M645 520V521M645 530V531M645 534V537M645 574V575M645 578V579M645 582V583M645 598V599M645 640V641M645 650V651M645 698V699M645 758V759M645 796V797M646 670V671M646 674V675M646 744V745M652 474V475M652 478V479M652 482V483M652 494V495M652 510V511M652 514V515M652 522V523M652 562V563M652 572V573M652 576V577M652 582V583M652 614V615M652 624V625M652 632V633M652 642V647M652 658V659M652 702V703M652 706V707M652 710V711M652 756V757M652 760V761M652 776V777M652 796V797M653 599V600M653 712V713M653 740V741M658 472V473M658 530V533M658 548V551M658 556V557M658 584V585M658 600V601M658 606V607M658 616V617M658 620V621M658 654V657M658 752V753M659 676V677" stroke="#ffff40" stroke-width="2" stroke-dasharray="1 1" fill="none"/>
<path d="M310 142V143.5M310 184V185.5M310 214V215.5M310 247V248.5M310 295V296.5M310 316V317.5M310 334V335.5M310 412V413.5M310 454V455.5M311 172V173.5M311 187V188.5M311 202V203.5M311 217V218.5M311 232V233.5M311 280V281.5M311 337V338.5M311 361V362.5M322 119V120.5M322 173V174.5M322 203V204.5M322 233V234.5M322 266V267.5M322 281V282.5M322 335V336.5M322 359V363.5M322 386V387.5M322 413V417.5M322 452V456.5M323 134V135.5M323 176V177.5M323 191V192.5M323 221V222.5M323 236V237.5M323 251V252.5M323 284V285.5M323 302V303.5M323 392V393.5M323 425V426.5M334 124V125.5M334 163V164.5M334 178V179.5M334 193V194.5M334 208V209.5M334 238V239.5M334 286V287.5M334 304V305.5M334 340V344.5M334 364V368.5M334 391V395.5M334 418V419.5M335 151V152.5M335 421V422.5M345 125V126.5M345 152V153.5M345 179V180.5M345 194V195.5M345 209V210.5M345 224V225.5M345 239V240.5M345 287V288.5M345 323V324.5M345 365V366.5M345 416V420.5M345 452V456.5M346 128V129.5M346 155V156.5M346 197V198.5M346 227V228.5M346 350V351.5M346 374V375.5M346 428V429.5M357 115V116.5M357 226V227.5M357 274V275.5M357 307V308.5M357 325V326.5M357 346V350.5M357 370V374.5M357 394V395.5M357 418V419.5M358 199V200.5M358 214V215.5M358 229V230.5M358 331V332.5M358 376V377.5M368 116V117.5M368 464V465.5M369 188V189.5M369 296V297.5M379 145V146.5M379 202V203.5M379 217V218.5M379 262V263.5M379 295V296.5M379 313V314.5M379 331V332.5M379 349V350.5M379 400V404.5M379 424V425.5M380 121V122.5M380 355V356.5M389 278V279.5M389 311V312.5M389 464V465.5M390 191V192.5M390 251V252.5M400 133V134.5M400 160V161.5M400 202V203.5M400 217V218.5M400 232V233.5M400 247V248.5M400 280V281.5M400 313V314.5M400 331V332.5M400 352V353.5M400 373V374.5M400 400V401.5M400 457V458.5M401 178V179.5M401 268V269.5M401 319V320.5M401 436V437.5M411 122V123.5M411 176V177.5M411 191V192.5M411 251V252.5M411 266V267.5M411 281V282.5M411 299V300.5M411 317V318.5M411 335V336.5M411 353V357.5M411 377V381.5M411 425V429.5M412 206V207.5M412 221V222.5M412 236V237.5M412 302V303.5M421 121V122.5M421 265V266.5M421 280V281.5M421 331V332.5M421 400V401.5M421 451V452.5M422 193V194.5M422 208V209.5M422 238V239.5M422 253V254.5M422 457V458.5M432 134V135.5M432 203V204.5M433 152V153.5M442 280V281.5M442 331V332.5M442 373V374.5M442 469V470.5M443 208V209.5M443 238V239.5M452 134V135.5M452 161V162.5M452 176V177.5M452 191V192.5M452 218V219.5M452 233V234.5M452 248V249.5M452 281V282.5M452 299V300.5M452 332V333.5M452 356V357.5M452 374V375.5M452 401V402.5M452 428V429.5M452 464V468.5M453 137V138.5M453 236V237.5M453 302V303.5M453 407V408.5M461 451V452.5M462 319V320.5M462 433V434.5M462 466V467.5M470 146V147.5M470 173V174.5M470 188V189.5M470 281V282.5M470 296V297.5M470 329V330.5M470 350V351.5M470 374V375.5M470 419V423.5M471 149V150.5M471 176V177.5M471 191V192.5M471 266V267.5M471 299V303.5M471 335V336.5M471 356V357.5M471 431V432.5M478 310V311.5M478 370V371.5M478 466V470.5M479 235V236.5M479 358V359.5M486 131V132.5M486 260V264.5M486 293V294.5M486 395V396.5M486 404V405.5M486 425V429.5M487 134V135.5M487 203V204.5M487 218V219.5M487 233V234.5M487 281V282.5M487 335V336.5M487 407V408.5M487 443V444.5M494 394V395.5M494 445V449.5M495 463V464.5M502 128V129.5M502 155V156.5M502 170V171.5M502 185V186.5M502 197V198.5M502 212V213.5M502 227V228.5M502 242V243.5M502 257V258.5M502 293V294.5M502 395V399.5M502 425V435.5M503 131V132.5M503 215V216.5M503 245V246.5M503 404V405.5M503 437V438.5M509 127V128.5M509 196V197.5M509 211V212.5M509 241V242.5M509 256V257.5M509 289V290.5M509 343V344.5M509 349V350.5M509 367V371.5M509 394V395.5M509 400V401.5M509 451V452.5M510 142V143.5M510 157V158.5M510 214V215.5M510 229V230.5M510 277V278.5M510 292V293.5M510 376V377.5M510 403V404.5M510 427V428.5M516 125V126.5M516 137V138.5M516 179V180.5M516 209V210.5M516 254V255.5M516 287V288.5M516 341V342.5M516 365V366.5M516 392V393.5M517 128V129.5M517 155V156.5M517 227V228.5M517 242V243.5M517 350V351.5M517 374V375.5M517 401V402.5M517 437V438.5M517 443V447.5M523 136V137.5M523 151V152.5M523 163V167.5M523 178V179.5M523 193V194.5M523 238V239.5M523 253V254.5M523 304V305.5M523 325V326.5M523 367V368.5M523 391V392.5M523 415V419.5M524 139V140.5M524 181V182.5M524 256V257.5M524 289V290.5M524 307V308.5M524 346V347.5M524 397V398.5M524 421V425.5M530 299V300.5M530 317V318.5M530 464V468.5M531 125V126.5M531 209V210.5M531 272V273.5M531 326V327.5M531 347V348.5M537 118V119.5M537 202V203.5M537 217V218.5M537 232V233.5M537 250V251.5M537 268V269.5M537 298V299.5M537 316V317.5M537 385V386.5M537 415V416.5M537 451V452.5M537 457V458.5M537 463V467.5M538 136V137.5M538 163V164.5M538 178V179.5M538 253V254.5M538 346V347.5M538 370V371.5M538 427V431.5M544 116V117.5M544 143V144.5M544 185V186.5M544 215V216.5M544 230V231.5M544 410V411.5M544 446V459.5M545 134V135.5M545 176V177.5M545 236V237.5M545 344V345.5M545 368V369.5M545 395V396.5M545 425V426.5M545 464V468.5M551 184V185.5M551 232V233.5M551 244V245.5M551 313V314.5M551 331V335.5M551 355V356.5M551 379V383.5M551 409V410.5M551 448V455.5M552 145V146.5M552 217V218.5M552 298V302.5M552 364V365.5M552 394V395.5M552 421V425.5M552 463V470.5M558 290V291.5M558 308V309.5M559 458V459.5M565 178V179.5M565 223V224.5M565 307V308.5M565 325V326.5M565 406V407.5M566 169V170.5M566 229V230.5M566 244V245.5M566 337V338.5M572 122V123.5M572 164V165.5M572 176V180.5M572 191V192.5M572 206V207.5M572 287V288.5M572 308V309.5M572 326V330.5M572 347V354.5M572 374V378.5M572 407V408.5M572 437V441.5M573 194V195.5M573 257V258.5M573 290V291.5M573 311V312.5M573 356V357.5M573 383V384.5M579 187V188.5M579 343V344.5M579 400V401.5M579 433V434.5M580 451V455.5M586 128V129.5M586 155V156.5M586 215V216.5M586 230V231.5M586 263V264.5M586 299V300.5M586 320V321.5M586 341V342.5M586 398V399.5M586 440V441.5M587 161V162.5M587 221V222.5M587 236V237.5M587 269V270.5M587 326V327.5M587 353V354.5M587 413V414.5M593 139V140.5M593 169V170.5M593 199V200.5M593 247V248.5M593 277V278.5M593 340V341.5M593 367V371.5M593 397V404.5M593 463V464.5M593 469V470.5M594 115V116.5M594 142V143.5M594 157V158.5M594 232V233.5M594 265V266.5M594 301V302.5M594 346V350.5M594 412V416.5M599 122V123.5M599 164V165.5M599 179V180.5M599 194V198.5M599 209V210.5M599 242V243.5M599 257V258.5M599 275V276.5M599 311V315.5M599 335V342.5M599 362V366.5M599 395V396.5M599 428V429.5M599 464V468.5M600 125V126.5M600 140V141.5M600 215V216.5M600 230V231.5M600 278V279.5M600 320V321.5M600 344V345.5M600 371V372.5M600 407V408.5M614 134V135.5M614 224V225.5M614 341V342.5M614 410V411.5M626 164V165.5M626 179V180.5M626 260V261.5M626 320V321.5M626 422V423.5M627 332V333.5M627 404V405.5M627 443V444.5M639 128V129.5M639 203V204.5M640 149V150.5M640 260V261.5M640 302V303.5M640 398V399.5M645 184V185.5M645 454V455.5M646 223V224.5M646 397V398.5M652 122V123.5M652 212V213.5M652 245V246.5M652 263V264.5M652 284V285.5M652 305V309.5M652 332V336.5M652 365V366.5M652 416V417.5M653 170V171.5M653 203V204.5M653 251V252.5M653 290V291.5M653 317V321.5M653 344V348.5M653 386V387.5M653 392V393.5M653 440V441.5M658 208V209.5M658 301V302.5M658 358V359.5M658 412V413.5M658 463V464.5M659 316V317.5M659 388V389.5" stroke="#ffa800" stroke-width="2" stroke-dasharray="1.5 1.5" fill="none"/>
<path d="M310 530V537M310 542V543M310 612V613M310 616V619M310 700V701M310 704V707M310 714V717M310 748V749M310 774V775M310 800V805M311 718V721M311 752V753M311 780V781M312 672V673M318 652V653M322 474V475M322 486V489M322 528V533M322 536V543M322 556V565M322 606V609M322 612V615M322 638V645M322 694V697M322 700V709M322 742V747M322 772V777M323 720V721M323 750V751M323 780V783M323 806V807M327 306V307M329 778V779M332 549V550M334 596V599M334 702V715M334 746V749M334 774V777M334 800V801M335 716V717M335 750V751M337 529V530M340 270V271M345 474V477M345 480V481M345 484V485M345 522V523M345 526V531M345 536V537M345 540V541M345 554V555M345 558V559M345 598V599M345 602V603M345 608V609M345 628V633M345 692V699M345 742V743M345 772V773M345 798V799M346 718V723M346 752V753M346 778V781M346 804V807M349 283V284M350 582V583M357 740V743M357 772V773M357 776V777M357 798V799M358 714V719M358 750V753M358 780V781M358 804V805M365 340V341M368 474V475M368 496V499M368 506V507M368 546V547M368 550V551M368 560V567M368 570V571M368 610V617M368 642V649M368 696V697M368 738V739M369 650V653M369 720V721M369 752V753M379 538V539M379 544V545M379 600V601M379 606V607M379 708V709M379 742V747M379 772V773M379 798V801M380 748V749M380 802V803M388 779V780M389 472V477M389 484V485M389 490V493M389 502V503M389 506V507M389 546V549M389 552V555M389 558V565M389 604V605M389 604V605M389 610V619M389 622V623M389 638V639M389 642V643M389 692V695M389 698V699M390 750V751M390 778V779M391 608V609M393 131V132M393 505V506M395 422V423M400 476V477M400 480V483M400 530V539M400 550V551M400 558V559M400 584V585M400 588V591M400 594V595M400 600V601M400 612V613M400 618V621M400 626V627M400 674V697M400 736V737M400 766V769M400 794V795M401 553V554M401 712V713M401 716V717M401 748V749M401 776V777M401 800V801M411 538V539M411 590V591M411 594V595M411 694V695M411 700V701M411 738V741M411 768V773M411 794V799M412 704V707M412 746V747M421 506V507M421 514V515M421 518V521M421 524V527M421 530V531M421 560V561M421 566V567M421 570V583M421 586V587M421 644V653M421 656V657M421 662V663M421 666V669M421 672V681M421 684V685M421 764V765M422 688V699M422 704V705M422 708V709M422 746V747M422 800V801M423 623V624M432 476V479M432 482V483M432 512V513M432 518V519M432 522V523M432 556V557M432 570V571M432 574V577M432 610V619M432 762V763M433 650V653M433 712V713M438 418V419M442 472V473M442 480V481M442 492V493M442 498V503M442 506V507M442 510V511M442 544V545M442 548V555M442 560V561M442 596V597M442 600V603M442 606V607M442 622V623M442 626V629M442 632V639M442 680V681M442 684V689M442 694V695M442 730V731M442 788V789M443 744V745M443 772V773M443 796V797M445 646V647M449 421V422M452 536V541M452 588V589M452 592V599M452 674V675M452 678V679M452 682V689M452 692V693M452 732V733M452 760V763M452 766V767M452 788V789M453 704V705M453 740V741M453 768V769M453 794V795M459 512V513M461 472V473M461 514V523M461 526V531M461 536V537M461 542V547M461 550V553M461 562V563M461 568V575M461 578V579M461 588V589M461 592V593M461 596V599M461 604V605M461 646V655M461 672V673M461 680V685M461 758V759M461 784V785M462 688V689M462 692V695M462 700V703M462 794V795M467 509V510M470 526V527M470 656V657M470 664V667M470 728V729M470 734V735M470 758V759M470 786V787M471 738V739M471 764V767M471 790V791M474 181V182M474 618V619M478 494V495M478 498V499M478 502V507M478 544V545M478 590V595M478 630V633M478 670V679M478 754V755M478 782V783M479 766V767M485 698V699M486 490V495M486 498V501M486 506V507M486 510V513M486 516V517M486 520V521M486 524V525M486 562V571M486 618V619M486 622V631M486 636V637M486 644V645M486 648V649M486 690V695M486 722V723M486 726V729M486 754V755M486 782V783M487 185V186M487 650V651M487 702V703M487 734V735M487 762V763M489 782V783M494 506V509M494 536V537M494 546V549M494 560V561M494 564V565M494 568V569M494 588V593M494 632V633M494 638V639M494 720V721M495 666V667M495 670V671M495 674V675M495 686V689M502 722V723M502 728V729M502 752V755M502 778V783M502 802V805M503 732V733M503 758V759M503 806V807M509 520V527M509 570V571M509 576V577M509 652V655M509 718V721M509 748V753M510 728V729M510 756V759M510 782V783M510 806V807M516 480V489M516 514V515M516 518V521M516 558V563M516 568V571M516 606V607M516 612V613M516 616V617M516 644V645M516 774V775M516 798V799M517 650V651M517 696V699M517 726V729M517 756V759M517 782V783M517 804V805M523 516V517M523 716V723M523 746V751M523 774V775M523 798V801M524 724V727M524 802V803M527 443V444M530 488V497M530 500V501M530 542V547M530 550V551M530 588V589M530 594V601M530 618V621M530 626V629M530 662V663M530 666V671M530 678V679M530 794V795M531 684V689M531 726V727M531 778V779M537 474V483M537 490V491M537 530V533M537 536V537M537 544V545M537 558V559M537 576V587M537 610V613M537 616V619M537 662V663M537 668V677M537 710V713M537 720V721M537 742V743M537 792V793M538 678V685M538 722V725M538 752V753M538 800V801M544 514V519M544 522V523M544 526V527M544 532V535M544 538V545M544 548V549M544 568V571M544 576V577M544 586V587M544 592V595M544 640V643M544 656V657M544 702V705M544 740V741M544 766V767M545 662V667M545 670V671M545 722V723M545 748V751M549 134V135M551 510V511M551 518V519M551 530V531M551 536V537M551 540V543M551 546V547M551 564V565M551 568V577M551 586V587M551 592V601M551 644V649M551 652V653M551 656V657M551 660V661M551 702V707M551 738V741M551 764V767M551 788V791M552 664V671M552 718V721M552 748V749M552 772V773M558 502V519M558 538V539M558 544V547M558 566V567M558 580V581M558 584V593M558 596V597M558 636V639M558 642V643M558 698V699M559 664V665M559 668V669M565 498V499M565 536V537M565 586V587M565 630V633M565 658V661M565 784V785M566 684V685M566 770V771M567 792V793M572 494V497M572 622V625M572 694V699M572 702V703M572 736V737M572 760V761M572 764V765M572 784V787M572 804V805M573 704V709M573 740V741M573 766V767M573 788V789M579 488V495M579 498V499M579 520V523M579 526V527M579 530V531M579 570V583M579 620V623M579 626V627M579 634V635M579 644V645M579 648V649M579 688V689M580 650V653M580 656V657M586 488V491M586 494V501M586 508V511M586 560V561M586 622V627M586 634V637M586 684V685M586 690V695M586 728V729M586 754V755M586 778V779M586 800V801M587 702V703M587 706V707M587 762V765M590 715V716M592 278V279M593 472V477M593 480V485M593 490V493M593 496V499M593 512V513M593 534V537M593 540V543M593 548V553M593 560V563M593 588V589M593 594V601M593 604V605M593 608V615M593 618V619M593 626V639M593 642V643M593 656V659M593 662V665M593 668V669M593 694V699M593 702V703M593 726V729M593 754V759M593 798V799M594 672V673M594 704V707M594 734V735M594 760V761M594 782V783M594 802V803M597 236V237M597 638V639M598 199V200M599 472V473M599 502V503M599 506V507M599 510V511M599 514V517M599 520V521M599 524V527M599 550V551M599 554V557M599 568V569M599 574V581M599 584V587M599 600V601M599 604V605M599 608V611M599 614V619M599 638V639M599 644V647M599 662V663M599 668V673M599 676V677M599 688V689M599 724V727M599 774V775M600 690V691M600 698V699M600 732V735M600 758V761M600 780V781M600 800V801M606 532V533M606 654V655M613 492V495M613 504V505M613 508V509M613 560V563M613 566V567M613 628V629M613 638V639M613 682V683M613 746V747M614 662V663M614 700V701M618 738V739M619 367V368M620 578V579M626 528V529M626 532V533M626 540V543M626 584V591M626 598V603M626 660V661M626 710V711M626 764V765M627 726V727M627 750V751M627 772V773M627 792V793M633 616V617M633 624V625M633 670V671M634 790V791M635 284V285M639 492V493M639 504V505M639 562V563M639 634V635M640 692V693M642 383V384M645 490V491M645 528V529M645 532V533M645 580V581M645 594V595M645 644V645M645 778V779M646 383V384M646 672V673M646 718V719M646 766V767M649 166V167M652 470V473M652 476V477M652 518V521M652 524V535M652 544V545M652 550V551M652 554V555M652 558V559M652 586V593M652 608V609M652 612V613M652 616V623M652 656V657M652 660V661M652 698V701M652 704V705M652 732V735M652 794V795M653 672V679M653 714V717M653 762V763M653 782V783M653 800V801M657 502V503M658 524V525M658 534V535M658 542V547M658 590V591M658 598V599M658 608V609M658 612V615M658 648V649M658 696V697M658 728V729M659 712V713M659 738V739M659 760V761M659 780V781" stroke="#ffa800" stroke-width="2" stroke-dasharray="1 1" fill="none"/>
<path d="M310 115V116.5M310 199V200.5M310 229V230.5M310 277V278.5M310 331V332.5M310 355V356.5M310 382V383.5M310 409V410.5M310 445V452.5M310 457V458.5M310 463V464.5M311 118V119.5M311 145V146.5M311 298V299.5M311 388V389.5M311 421V422.5M311 466V470.5M322 248V249.5M323 206V207.5M323 428V429.5M334 136V137.5M334 223V224.5M334 253V254.5M334 268V269.5M334 301V302.5M334 319V323.5M334 388V389.5M334 415V416.5M334 445V455.5M335 271V272.5M335 307V308.5M335 325V326.5M335 346V347.5M335 370V371.5M335 397V398.5M335 424V425.5M335 457V458.5M345 341V342.5M345 449V450.5M346 275V276.5M346 401V402.5M357 127V128.5M357 154V155.5M357 196V197.5M357 211V212.5M357 241V242.5M357 289V290.5M357 367V368.5M357 451V458.5M358 130V131.5M358 157V158.5M358 277V278.5M358 313V314.5M358 352V353.5M358 403V404.5M358 427V428.5M358 463V467.5M379 118V119.5M379 172V173.5M379 277V278.5M379 310V311.5M379 328V329.5M379 373V374.5M379 397V398.5M379 421V422.5M379 454V458.5M379 463V467.5M380 175V176.5M380 265V266.5M380 280V281.5M380 298V299.5M380 316V317.5M380 334V335.5M380 379V380.5M380 406V407.5M380 430V434.5M389 467V468.5M390 440V441.5M400 454V455.5M401 124V125.5M411 134V135.5M411 161V162.5M411 203V204.5M411 218V219.5M411 233V234.5M411 248V249.5M411 296V297.5M411 314V315.5M411 332V333.5M411 350V351.5M411 374V375.5M411 401V402.5M411 422V423.5M411 455V459.5M412 125V126.5M412 137V138.5M412 164V165.5M412 284V285.5M412 320V321.5M412 338V339.5M412 359V360.5M412 383V384.5M412 407V408.5M412 431V432.5M412 464V468.5M421 313V314.5M421 445V449.5M421 454V455.5M433 449V450.5M442 466V467.5M443 442V443.5M452 188V189.5M452 203V204.5M452 296V297.5M452 314V315.5M452 350V351.5M452 422V423.5M452 452V459.5M453 125V126.5M453 164V165.5M453 284V285.5M453 320V321.5M453 338V339.5M453 359V360.5M453 383V384.5M453 434V435.5M461 448V449.5M462 469V470.5M470 119V120.5M470 278V279.5M470 311V312.5M470 371V372.5M470 398V399.5M470 455V459.5M471 206V207.5M471 221V222.5M471 236V237.5M471 251V252.5M471 359V360.5M471 383V384.5M471 407V408.5M471 464V465.5M486 143V144.5M486 170V171.5M486 326V327.5M486 347V348.5M486 371V372.5M487 161V162.5M487 317V318.5M487 356V357.5M487 380V381.5M487 446V453.5M495 466V467.5M502 140V141.5M502 182V183.5M502 290V291.5M502 308V309.5M502 326V327.5M502 344V345.5M502 368V369.5M502 392V393.5M502 422V423.5M503 158V159.5M503 200V201.5M503 230V231.5M503 278V279.5M503 314V315.5M503 332V333.5M503 353V354.5M503 377V378.5M509 139V140.5M509 166V167.5M509 181V182.5M509 271V272.5M509 322V323.5M509 391V392.5M509 415V416.5M509 448V449.5M509 454V458.5M510 130V131.5M510 199V200.5M510 244V245.5M510 313V314.5M510 331V332.5M510 352V353.5M510 466V467.5M516 164V165.5M516 320V321.5M516 389V390.5M516 419V423.5M517 311V312.5M517 329V330.5M523 268V269.5M523 301V302.5M523 319V320.5M523 340V341.5M523 361V365.5M523 388V389.5M523 412V413.5M523 448V452.5M524 127V128.5M524 154V155.5M524 196V197.5M524 211V212.5M524 226V227.5M524 241V242.5M524 274V275.5M524 328V329.5M524 349V350.5M524 373V374.5M524 400V401.5M530 458V459.5M537 145V146.5M537 187V188.5M537 280V281.5M537 358V359.5M537 412V413.5M537 454V455.5M538 238V239.5M538 286V287.5M538 397V398.5M544 278V279.5M544 443V444.5M551 127V128.5M551 154V155.5M551 169V170.5M551 310V311.5M551 442V446.5M552 160V161.5M552 250V251.5M558 440V441.5M559 464V468.5M572 119V120.5M572 134V135.5M572 161V162.5M572 221V222.5M572 236V237.5M572 269V270.5M572 305V306.5M572 323V324.5M572 371V372.5M572 404V405.5M572 431V435.5M573 137V138.5M573 152V153.5M573 242V243.5M573 275V276.5M573 332V333.5M573 359V360.5M573 386V387.5M573 413V417.5M573 443V447.5M586 317V318.5M586 431V432.5M586 443V444.5M587 119V120.5M587 329V330.5M587 380V381.5M587 446V450.5M593 124V125.5M593 166V167.5M593 181V182.5M593 196V197.5M593 211V212.5M593 244V245.5M593 295V296.5M593 316V317.5M593 337V338.5M593 364V365.5M593 394V395.5M593 448V458.5M594 172V173.5M594 187V188.5M594 202V203.5M594 217V218.5M594 250V251.5M594 283V284.5M594 304V305.5M594 325V326.5M594 376V377.5M594 418V419.5M599 149V150.5M599 224V225.5M599 359V360.5M599 392V393.5M599 425V426.5M600 155V156.5M600 263V264.5M600 299V300.5M600 323V324.5M600 347V348.5M600 374V375.5M600 410V411.5M600 443V444.5M652 362V363.5M652 464V465.5" stroke="#ff6a00" stroke-width="2" stroke-dasharray="1.5 1.5" fill="none"/>
<path d="M309 256V257M309 321V322M310 476V477M310 512V515M310 518V529M310 538V541M310 544V553M310 556V557M310 598V611M310 614V615M310 620V635M310 638V641M310 692V693M310 698V699M310 702V703M310 742V745M310 772V773M310 798V799M311 722V723M311 754V755M311 782V783M311 806V807M319 190V191M322 484V485M322 490V491M322 524V527M322 566V571M322 604V605M322 610V611M322 646V649M322 698V699M322 740V741M322 798V799M323 650V651M323 722V723M323 752V755M327 614V615M334 502V503M334 506V539M334 542V543M334 578V579M334 582V595M334 600V613M334 616V617M334 660V661M334 666V669M334 676V677M334 680V687M334 690V701M334 740V745M334 772V773M334 778V779M334 802V803M335 718V723M335 752V755M335 780V783M335 804V807M340 631V632M345 482V483M345 518V521M345 524V525M345 590V597M345 634V637M345 686V691M345 740V741M345 770V771M353 609V610M357 157V158M357 516V547M357 584V611M357 616V617M357 686V687M357 692V693M357 696V699M357 770V771M358 720V721M358 806V807M361 753V754M365 633V634M368 502V505M368 508V509M368 542V545M368 568V569M368 572V573M368 606V609M368 694V695M374 738V739M379 472V473M379 478V481M379 526V537M379 540V543M379 546V555M379 558V559M379 586V599M379 602V605M379 608V615M379 624V625M379 670V671M379 676V677M379 686V699M379 738V741M379 768V771M379 796V797M380 276V277M380 712V721M380 750V751M380 776V779M380 804V805M381 353V354M382 549V550M383 492V493M384 390V391M389 470V471M389 498V501M389 504V505M389 508V509M389 542V545M389 550V551M389 566V569M389 602V603M389 606V609M389 640V641M389 644V649M389 690V691M389 696V697M400 484V491M400 524V529M400 586V587M400 624V625M400 628V631M400 668V673M401 714V715M401 802V803M404 730V731M408 451V452M409 589V590M411 470V471M411 510V511M411 516V517M411 520V537M411 540V549M411 568V569M411 572V573M411 578V589M411 592V593M411 596V609M411 652V653M411 656V693M411 696V699M411 702V703M411 736V737M411 766V767M411 792V793M412 708V715M412 744V745M412 748V749M412 774V777M412 800V801M419 494V495M421 494V505M421 508V511M421 522V523M421 528V529M421 532V539M421 562V565M421 568V569M421 584V585M421 588V597M421 630V643M421 660V661M421 664V665M421 670V671M421 682V683M421 686V687M422 710V711M426 659V660M433 656V657M434 253V254M435 522V523M440 225V226M441 428V429M442 504V505M442 508V509M442 546V547M442 562V563M442 598V599M442 604V605M442 640V643M442 682V683M447 209V210M452 470V483M452 486V487M452 528V535M452 542V559M452 578V587M452 590V591M452 600V615M452 654V655M452 660V673M452 676V677M452 680V681M452 690V691M452 694V695M452 728V731M452 786V787M453 696V703M453 706V707M453 742V743M453 770V771M457 299V300M461 474V475M461 508V513M461 548V549M461 554V555M461 560V561M461 564V567M461 594V595M461 600V603M461 606V607M461 640V645M462 696V699M464 758V759M466 575V576M470 512V513M470 518V519M470 522V525M470 528V539M470 542V549M470 564V565M470 568V591M470 594V597M470 642V643M470 648V655M470 658V663M470 668V681M470 726V727M470 756V757M470 784V785M471 682V687M471 690V691M471 694V695M471 792V793M472 405V406M474 533V534M475 115V116M478 540V541M478 636V637M479 698V699M485 123V124M486 482V489M486 496V497M486 514V515M486 518V519M486 522V523M486 526V529M486 572V579M486 612V617M486 620V621M486 646V647M486 684V689M486 724V725M486 780V781M486 804V805M487 652V657M487 704V705M487 736V737M487 764V765M487 788V789M494 502V505M494 544V545M494 594V597M494 630V631M494 634V637M495 680V681M495 684V685M497 201V202M502 370V371M502 490V499M502 502V509M502 610V611M502 614V625M502 628V631M502 682V683M502 688V693M502 720V721M502 750V751M502 776V777M502 800V801M503 694V697M503 700V701M503 730V731M503 760V761M503 784V787M504 584V585M506 356V357M508 169V170M509 506V507M509 512V519M509 528V543M509 562V569M509 572V575M509 578V593M509 632V635M509 638V651M509 656V659M509 716V717M509 776V777M509 800V801M510 660V679M510 682V683M510 730V733M510 784V785M510 798V799M511 672V673M514 443V444M515 635V636M516 478V479M516 524V525M516 572V573M516 608V609M516 678V679M516 716V717M516 746V747M517 652V653M517 730V731M519 458V459M523 502V503M523 506V515M523 518V527M523 530V531M523 560V577M523 580V581M523 632V651M523 708V715M523 744V745M523 772V773M523 778V779M523 796V797M524 654V657M524 728V729M524 754V757M524 780V781M528 142V143M528 768V769M529 133V134M530 498V499M530 502V503M530 536V541M530 586V587M530 590V593M530 622V625M530 630V633M530 664V665M531 690V691M532 200V201M537 484V489M537 492V493M537 526V529M537 534V535M537 574V575M537 614V615M537 620V621M537 652V661M537 708V709M537 768V769M538 686V687M543 621V622M544 470V473M544 506V513M544 546V547M544 550V553M544 560V567M544 590V591M544 596V601M544 634V639M544 644V645M545 668V669M545 672V677M545 776V777M551 472V475M551 508V509M551 512V517M551 544V545M551 548V555M551 560V563M551 566V567M551 590V591M551 602V605M551 638V643M551 700V701M552 672V677M552 774V775M552 796V797M558 500V501M558 540V543M558 560V561M558 594V595M558 630V635M558 696V697M558 791V792M559 666V667M559 670V671M571 250V251M572 472V473M572 476V493M572 498V509M572 512V515M572 556V565M572 602V603M572 610V621M572 626V639M572 642V645M572 688V693M572 732V735M572 758V759M572 782V783M573 710V713M573 742V743M573 768V769M573 790V791M579 486V487M579 528V529M579 532V533M579 584V585M579 618V619M579 624V625M579 686V687M580 654V655M583 497V498M586 476V477M586 480V487M586 492V493M586 502V507M586 512V523M586 556V559M586 562V571M586 608V621M586 628V629M586 632V633M586 638V645M586 678V683M586 686V689M586 696V697M587 467V468M587 546V547M587 698V699M587 704V705M587 786V787M593 301V302M593 486V489M593 502V511M593 514V519M593 526V533M593 538V539M593 546V547M593 564V573M593 580V587M593 590V593M593 640V641M593 644V647M593 652V655M593 692V693M593 752V753M593 776V777M593 796V797M594 674V677M594 708V709M594 736V737M594 762V763M594 784V785M595 398V399M595 798V799M599 470V471M599 528V535M599 542V549M599 552V553M599 582V583M599 588V589M599 598V599M599 602V603M599 606V607M599 664V667M599 722V723M599 750V751M599 794V795M600 694V697M600 782V783M601 290V291M601 720V721M605 405V406M606 485V486M613 586V587M616 244V245M617 562V563M622 130V131M625 562V563M630 697V698M631 786V787M633 219V220M633 432V433M648 191V192M649 649V650M652 543V544M652 546V549M652 552V553M652 594V599M652 606V607M652 610V611M652 648V649M652 730V731M652 754V755M659 762V763" stroke="#ff6a00" stroke-width="2" stroke-dasharray="1 1" fill="none"/>
<path d="M347 132V150M347 155V186M355 195V232M355 236V270M416 263V308M375 410V458M375 463V504M432 402V458M432 463V472M338 516V547M325 609V626M337 640V673M325 689V716M347 718V750M347 754V781M409 790V806" stroke="#ffffff" stroke-width="2" fill="none"/>
<rect x="305" y="113" width="371" height="696" fill="none" stroke="#000" stroke-width="1.6"/>
<line x1="298" y1="809.0" x2="305" y2="809.0" stroke="#000" stroke-width="1.8"/>
<text x="290" y="812.9" font-size="11.2" text-anchor="end">0</text>
<line x1="298" y1="659.18" x2="305" y2="659.18" stroke="#000" stroke-width="1.8"/>
<text x="290" y="663.0799999999999" font-size="11.2" text-anchor="end">2000</text>
<line x1="298" y1="509.35999999999996" x2="305" y2="509.35999999999996" stroke="#000" stroke-width="1.8"/>
<text x="290" y="513.26" font-size="11.2" text-anchor="end">4000</text>
<line x1="298" y1="359.53999999999996" x2="305" y2="359.53999999999996" stroke="#000" stroke-width="1.8"/>
<text x="290" y="363.43999999999994" font-size="11.2" text-anchor="end">6000</text>
<line x1="298" y1="209.7199999999999" x2="305" y2="209.7199999999999" stroke="#000" stroke-width="1.8"/>
<text x="290" y="213.61999999999992" font-size="11.2" text-anchor="end">8000</text>
<line x1="304.9" y1="809" x2="304.9" y2="816" stroke="#000" stroke-width="1.8"/>
<text x="304.9" y="831.8" font-size="11.2" text-anchor="middle">0</text>
<line x1="379.65" y1="809" x2="379.65" y2="816" stroke="#000" stroke-width="1.8"/>
<text x="379.65" y="831.8" font-size="11.2" text-anchor="middle">1000</text>
<line x1="454.4" y1="809" x2="454.4" y2="816" stroke="#000" stroke-width="1.8"/>
<text x="454.4" y="831.8" font-size="11.2" text-anchor="middle">2000</text>
<line x1="529.15" y1="809" x2="529.15" y2="816" stroke="#000" stroke-width="1.8"/>
<text x="529.15" y="831.8" font-size="11.2" text-anchor="middle">3000</text>
<line x1="603.9" y1="809" x2="603.9" y2="816" stroke="#000" stroke-width="1.8"/>
<text x="603.9" y="831.8" font-size="11.2" text-anchor="middle">4000</text>
<text x="490.6" y="849.8" font-size="11.2" text-anchor="middle">X</text>
<text x="0" y="0" font-size="11.2" text-anchor="middle" transform="translate(252.7,461) rotate(-90)">Y</text>
<defs><linearGradient id="hot" x1="0" y1="1" x2="0" y2="0"><stop offset="0" stop-color="rgb(11,0,0)"/><stop offset="0.365" stop-color="rgb(255,0,0)"/><stop offset="0.746" stop-color="rgb(255,255,0)"/><stop offset="1" stop-color="rgb(255,255,255)"/></linearGradient></defs>
<rect x="712" y="113" width="35" height="696" fill="url(#hot)" stroke="#000" stroke-width="1.6"/>
<line x1="747" y1="809.0" x2="754" y2="809.0" stroke="#000" stroke-width="1.8"/>
<text x="762.7" y="812.9" font-size="11.2">0</text>
<line x1="747" y1="693.0" x2="754" y2="693.0" stroke="#000" stroke-width="1.8"/>
<text x="762.7" y="696.9" font-size="11.2">500</text>
<line x1="747" y1="577.0" x2="754" y2="577.0" stroke="#000" stroke-width="1.8"/>
<text x="762.7" y="580.9" font-size="11.2">1000</text>
<line x1="747" y1="461.0" x2="754" y2="461.0" stroke="#000" stroke-width="1.8"/>
<text x="762.7" y="464.9" font-size="11.2">1500</text>
<line x1="747" y1="345.0" x2="754" y2="345.0" stroke="#000" stroke-width="1.8"/>
<text x="762.7" y="348.9" font-size="11.2">2000</text>
<line x1="747" y1="229.0" x2="754" y2="229.0" stroke="#000" stroke-width="1.8"/>
<text x="762.7" y="232.9" font-size="11.2">2500</text>
<line x1="747" y1="113.0" x2="754" y2="113.0" stroke="#000" stroke-width="1.8"/>
<text x="762.7" y="116.9" font-size="11.2">3000</text>
<path d="M911.2,232.7 H992.1 V158 H996.9 V119.3 H1002.8 V124.9 H1009 V138.7 H1013.8 V143.8 H1019.8 V145.8 H1025 V147.8 H1030.9 V149 H1036.9 V150 H1042.2 V151 H1047.8 V153 H1053 V154 H1058.7 V155 H1064 V156.9 H1070.2 V158 H1080.9 V159 H1086.6 V160 H1092.4 V161 H1103.9 V162 H1115.1 V163.1 H1132 V164 H1147.7 V165.1 H1164.9 V166 H1182 V140.8 H1185" fill="none" stroke="#0000ff" stroke-width="1.6" stroke-linejoin="round"/>
<rect x="911.2" y="113" width="273.79999999999995" height="119.69999999999999" fill="none" stroke="#000" stroke-width="1.8"/>
<line x1="904.2" y1="232.7" x2="911.2" y2="232.7" stroke="#000" stroke-width="1.8"/>
<text x="896.5" y="236.6" font-size="11.2" text-anchor="end">0</text>
<line x1="904.2" y1="202.29999999999998" x2="911.2" y2="202.29999999999998" stroke="#000" stroke-width="1.8"/>
<text x="896.5" y="206.2" font-size="11.2" text-anchor="end">2</text>
<line x1="904.2" y1="171.89999999999998" x2="911.2" y2="171.89999999999998" stroke="#000" stroke-width="1.8"/>
<text x="896.5" y="175.79999999999998" font-size="11.2" text-anchor="end">4</text>
<line x1="904.2" y1="141.5" x2="911.2" y2="141.5" stroke="#000" stroke-width="1.8"/>
<text x="896.5" y="145.4" font-size="11.2" text-anchor="end">6</text>
<line x1="911.2" y1="232.7" x2="911.2" y2="239.5" stroke="#000" stroke-width="1.8"/>
<line x1="957.7" y1="232.7" x2="957.7" y2="239.5" stroke="#000" stroke-width="1.8"/>
<line x1="1004.2" y1="232.7" x2="1004.2" y2="239.5" stroke="#000" stroke-width="1.8"/>
<line x1="1050.7" y1="232.7" x2="1050.7" y2="239.5" stroke="#000" stroke-width="1.8"/>
<line x1="1097.2" y1="232.7" x2="1097.2" y2="239.5" stroke="#000" stroke-width="1.8"/>
<line x1="1143.7" y1="232.7" x2="1143.7" y2="239.5" stroke="#000" stroke-width="1.8"/>
<text x="911.2" y="255.89999999999998" font-size="11.2" text-anchor="middle">0</text>
<text x="1004.2" y="255.89999999999998" font-size="11.2" text-anchor="middle">1000</text>
<text x="1097.2" y="255.89999999999998" font-size="11.2" text-anchor="middle">2000</text>
<text x="1048" y="274" font-size="11.2" text-anchor="middle" textLength="33.5" lengthAdjust="spacingAndGlyphs">counts</text>
<text x="0" y="0" font-size="11.2" text-anchor="middle" textLength="70.4" lengthAdjust="spacingAndGlyphs" transform="translate(878.1,172.85) rotate(-90)">log frequency</text>
<text x="0" y="0" font-size="11.2" text-anchor="middle" textLength="95" lengthAdjust="spacingAndGlyphs" transform="translate(1194.4,174.9) rotate(90)">histogram (detail)</text>
<path d="M911.2,404.9 H925.1 V306 H929.9 V290.9 H936.1 V319.5 H941.1 V324 H946.8 V327.7 H952.4 V329.8 H957.8 V332.9 H963.4 V335 H969 V340.8 H974.8 V352.7 H980.4 V354 H985.9 V355 H992 V355.9 H997.5 V357.1 H1009 V358 H1024.9 V359 H1041.8 V360 H1048 V358.8 H1053.1 V360 H1092 V361 H1103.7 V361.9 H1120.2 V362.9 H1125.9 V361.9 H1137.3 V362.9 H1143.4 V361.9 H1154.4 V362.9 H1165.5 V361.9 H1171.5 V328.9 H1176.2 V404.9" fill="none" stroke="#0000ff" stroke-width="1.6" stroke-linejoin="round"/>
<rect x="911.2" y="284.9" width="273.79999999999995" height="120.0" fill="none" stroke="#000" stroke-width="1.8"/>
<line x1="904.2" y1="404.9" x2="911.2" y2="404.9" stroke="#000" stroke-width="1.8"/>
<text x="896.5" y="408.79999999999995" font-size="11.2" text-anchor="end">0</text>
<line x1="904.2" y1="374.9" x2="911.2" y2="374.9" stroke="#000" stroke-width="1.8"/>
<text x="896.5" y="378.79999999999995" font-size="11.2" text-anchor="end">2</text>
<line x1="904.2" y1="344.9" x2="911.2" y2="344.9" stroke="#000" stroke-width="1.8"/>
<text x="896.5" y="348.79999999999995" font-size="11.2" text-anchor="end">4</text>
<line x1="904.2" y1="314.9" x2="911.2" y2="314.9" stroke="#000" stroke-width="1.8"/>
<text x="896.5" y="318.79999999999995" font-size="11.2" text-anchor="end">6</text>
<line x1="904.2" y1="284.9" x2="911.2" y2="284.9" stroke="#000" stroke-width="1.8"/>
<text x="896.5" y="288.79999999999995" font-size="11.2" text-anchor="end">8</text>
<line x1="929.3" y1="404.9" x2="929.3" y2="411.7" stroke="#000" stroke-width="1.8"/>
<line x1="966.55" y1="404.9" x2="966.55" y2="411.7" stroke="#000" stroke-width="1.8"/>
<line x1="1003.8" y1="404.9" x2="1003.8" y2="411.7" stroke="#000" stroke-width="1.8"/>
<line x1="1041.05" y1="404.9" x2="1041.05" y2="411.7" stroke="#000" stroke-width="1.8"/>
<line x1="1078.3" y1="404.9" x2="1078.3" y2="411.7" stroke="#000" stroke-width="1.8"/>
<line x1="1115.55" y1="404.9" x2="1115.55" y2="411.7" stroke="#000" stroke-width="1.8"/>
<line x1="1152.8" y1="404.9" x2="1152.8" y2="411.7" stroke="#000" stroke-width="1.8"/>
<text x="929.3" y="428.09999999999997" font-size="11.2" text-anchor="middle">0</text>
<text x="1003.8" y="428.09999999999997" font-size="11.2" text-anchor="middle">20000</text>
<text x="1078.3" y="428.09999999999997" font-size="11.2" text-anchor="middle">40000</text>
<text x="1152.8" y="428.09999999999997" font-size="11.2" text-anchor="middle">60000</text>
<text x="1048" y="445.9" font-size="11.2" text-anchor="middle" textLength="33.5" lengthAdjust="spacingAndGlyphs">counts</text>
<text x="0" y="0" font-size="11.2" text-anchor="middle" textLength="70.4" lengthAdjust="spacingAndGlyphs" transform="translate(878.1,344.9) rotate(-90)">log frequency</text>
<text x="0" y="0" font-size="11.2" text-anchor="middle" textLength="80.2" lengthAdjust="spacingAndGlyphs" transform="translate(1194.4,349.1) rotate(90)">histogram (full)</text>
<text x="987.5" y="576.6" font-size="11.2" textLength="117.4" lengthAdjust="spacingAndGlyphs">cut in x not configured</text>
<text x="987.5" y="750.7" font-size="11.2" textLength="117.4" lengthAdjust="spacingAndGlyphs">cut in y not configured</text>
<text x="6.4" y="864" font-size="10.8" textLength="172.7" lengthAdjust="spacingAndGlyphs">powered by QC: www.eso.org/HC</text>
<text x="936.6" y="864" font-size="10.8" textLength="302" lengthAdjust="spacingAndGlyphs">created by qc_rawdisp.py v1.2.3 on 2025-01-17T20:28:56</text>
</svg></body></html>
